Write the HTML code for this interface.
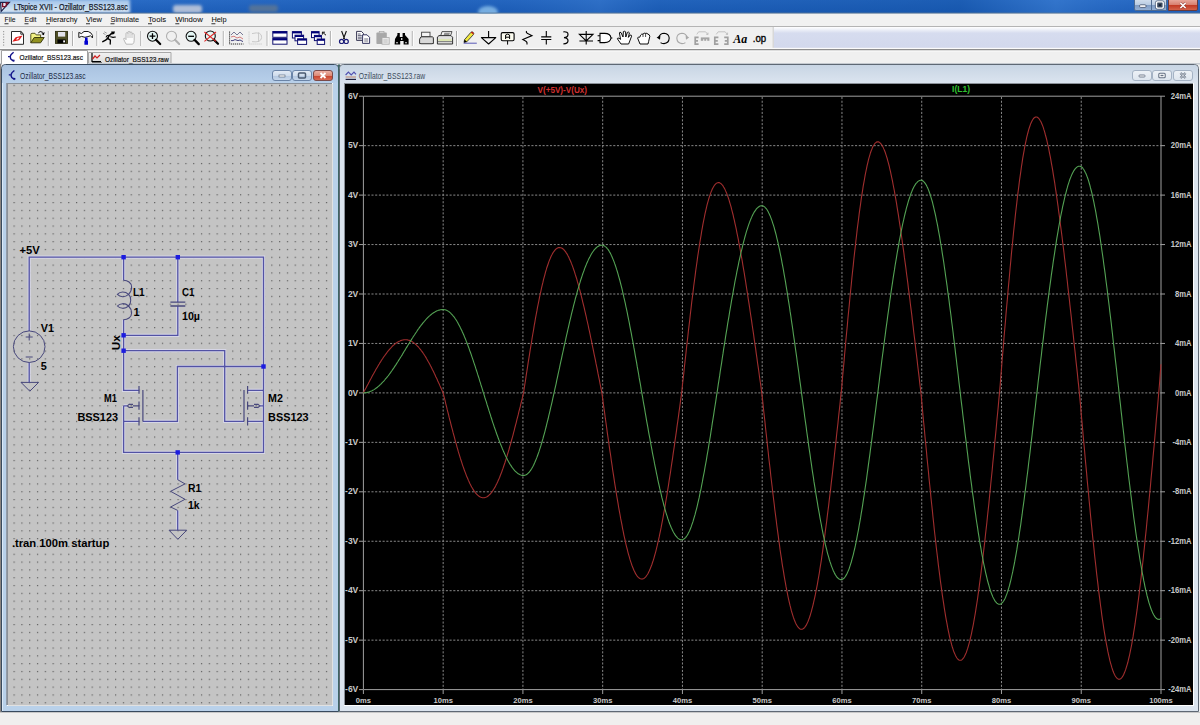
<!DOCTYPE html>
<html><head><meta charset="utf-8"><style>
html,body{margin:0;padding:0;width:1200px;height:725px;overflow:hidden;background:#f0f0f0}
svg{display:block;font-family:"Liberation Sans", sans-serif}
</style></head><body>
<svg width="1200" height="725" viewBox="0 0 1200 725">
<defs>
<linearGradient id="tbase" x1="0" y1="0" x2="0" y2="1">
 <stop offset="0" stop-color="#2a6cc6"/><stop offset="1" stop-color="#1c5cb6"/>
</linearGradient>
<linearGradient id="tbh" x1="0" y1="0" x2="1" y2="0">
 <stop offset="0" stop-color="#2a6cc6" stop-opacity="0"/><stop offset="0.3" stop-color="#1858b0" stop-opacity="0.5"/><stop offset="0.42" stop-color="#1858b0" stop-opacity="0.4"/><stop offset="0.5" stop-color="#3474c8" stop-opacity="0.6"/><stop offset="0.55" stop-color="#1656ac" stop-opacity="0.5"/><stop offset="0.8" stop-color="#1252a6" stop-opacity="0.7"/><stop offset="0.88" stop-color="#3a7cd0" stop-opacity="0.7"/><stop offset="0.95" stop-color="#2466c0" stop-opacity="0.4"/><stop offset="1" stop-color="#2a6cc6" stop-opacity="0.2"/>
</linearGradient>
<linearGradient id="tglow" x1="0" y1="0" x2="0" y2="1">
 <stop offset="0" stop-color="#9cc0e8"/><stop offset="1" stop-color="#e0ecf6"/>
</linearGradient>
<filter id="bl2" x="-20%" y="-50%" width="140%" height="200%"><feGaussianBlur stdDeviation="1.6"/></filter>
<linearGradient id="tbg" x1="0" y1="0" x2="1" y2="0">
 <stop offset="0" stop-color="#5f90cc"/><stop offset="0.12" stop-color="#4a80c4"/><stop offset="0.2" stop-color="#2566b8"/><stop offset="1" stop-color="#1f5fb5"/>
</linearGradient>
<linearGradient id="tbv" x1="0" y1="0" x2="0" y2="1">
 <stop offset="0" stop-color="#ffffff" stop-opacity="0.12"/><stop offset="1" stop-color="#000000" stop-opacity="0.08"/>
</linearGradient>
<radialGradient id="glow" cx="0.5" cy="0.5" r="0.5">
 <stop offset="0" stop-color="#d8e8f8" stop-opacity="0.85"/><stop offset="0.7" stop-color="#b8d4f0" stop-opacity="0.5"/><stop offset="1" stop-color="#b8d4f0" stop-opacity="0"/>
</radialGradient>
<linearGradient id="actT" x1="0" y1="0" x2="0" y2="1">
 <stop offset="0" stop-color="#a9c2e0"/><stop offset="1" stop-color="#b8d0ea"/>
</linearGradient>
<linearGradient id="inaT" x1="0" y1="0" x2="0" y2="1">
 <stop offset="0" stop-color="#c8d5e4"/><stop offset="1" stop-color="#dbe4ef"/>
</linearGradient>
<linearGradient id="rebar" x1="0" y1="0" x2="0" y2="1">
 <stop offset="0" stop-color="#ffffff"/><stop offset="0.28" stop-color="#d6dcef"/><stop offset="1" stop-color="#d2d8ec"/>
</linearGradient>
<linearGradient id="btnB" x1="0" y1="0" x2="0" y2="1">
 <stop offset="0" stop-color="#d4e0ee"/><stop offset="0.5" stop-color="#b8cbe2"/><stop offset="0.55" stop-color="#7f9cc4"/><stop offset="1" stop-color="#97b2d6"/>
</linearGradient>
<linearGradient id="btnR" x1="0" y1="0" x2="0" y2="1">
 <stop offset="0" stop-color="#eab0a4"/><stop offset="0.5" stop-color="#d88070"/><stop offset="0.55" stop-color="#c23a24"/><stop offset="1" stop-color="#d4664e"/>
</linearGradient>
<linearGradient id="cbtnB" x1="0" y1="0" x2="0" y2="1">
 <stop offset="0" stop-color="#e4ecf6"/><stop offset="0.5" stop-color="#cfdcec"/><stop offset="0.55" stop-color="#b4c8e0"/><stop offset="1" stop-color="#c8d8ec"/>
</linearGradient>
<linearGradient id="cbtnR" x1="0" y1="0" x2="0" y2="1">
 <stop offset="0" stop-color="#eeb4a8"/><stop offset="0.5" stop-color="#dc8a78"/><stop offset="0.55" stop-color="#c8442e"/><stop offset="1" stop-color="#dc7058"/>
</linearGradient>
<linearGradient id="cbtnI" x1="0" y1="0" x2="0" y2="1">
 <stop offset="0" stop-color="#eef2f7"/><stop offset="1" stop-color="#dde5ee"/>
</linearGradient>
<linearGradient id="tab2" x1="0" y1="0" x2="0" y2="1">
 <stop offset="0" stop-color="#f2f2f2"/><stop offset="1" stop-color="#dcdcdc"/>
</linearGradient>
<pattern id="dots" x="13.5" y="84.8" width="7.81" height="7.815" patternUnits="userSpaceOnUse">
 <rect x="0" y="0" width="1.2" height="1.2" fill="#5e5e5e"/>
</pattern>
<clipPath id="pc"><rect x="345" y="84" width="848" height="621"/></clipPath>
</defs>

<rect x="0" y="0" width="1200" height="13" fill="url(#tbase)"/>
<rect x="0" y="0" width="1200" height="13" fill="url(#tbh)" opacity="0.8"/>
<g filter="url(#bl2)"><rect x="-4" y="-1" width="134" height="14" fill="url(#tglow)"/></g>
<g filter="url(#bl2)"><rect x="173" y="5" width="29" height="8" rx="3" fill="#ece6e2" opacity="0.7"/><rect x="249" y="5" width="29" height="7" rx="3" fill="#6a7a8c" opacity="0.7"/><ellipse cx="488" cy="12" rx="10" ry="6" fill="#9cd0f4" opacity="0.7"/></g>
<rect x="0" y="12.6" width="1200" height="1" fill="#5a7898"/>
<path d="M0.6,2.4 H9.4 L1.2,11.4 Z" fill="#e8e4f0" stroke="#18204a" stroke-width="1.2"/>
<path d="M2.6,3 V6.6 H5 M5.4,3 H8.6 M7,3 L5.6,6.8" stroke="#801028" stroke-width="1.3" fill="none"/>
<text x="13.8" y="10" font-size="8.5" fill="#18222e" stroke="#18222e" stroke-width="0.25" textLength="114" lengthAdjust="spacingAndGlyphs" >LTspice XVII - Ozillator_BSS123.asc</text>
<path d="M1134.5,-1 V9 Q1134.5,10.5 1136,10.5 H1166.5 V-1" fill="url(#btnB)" stroke="#4e6a90"/>
<path d="M1151.5,-1 V10.5" stroke="#4e6a90"/>
<path d="M1168.5,-1 V10.5 H1196 Q1197.5,10.5 1197.5,9 V-1" fill="url(#btnR)" stroke="#6a3a3a"/>
<rect x="1139.6" y="4.8" width="6.4" height="2.6" rx="1" fill="#fff" stroke="#2a3a58" stroke-width="0.7"/>
<rect x="1156.4" y="1.8" width="7" height="6.4" rx="1.4" fill="#3a4a60" stroke="#fff" stroke-width="1.6"/>
<rect x="1155.4" y="0.8" width="9" height="8.4" rx="2" fill="none" stroke="#2a3a58" stroke-width="0.6"/>
<rect x="1158.9" y="4.2" width="2" height="1.8" fill="#1a2030"/>
<path d="M1180.4,3 L1185.6,8 M1185.6,3 L1180.4,8" stroke="#5a2020" stroke-width="2.6" opacity="0.5"/><path d="M1180.4,3 L1185.6,8 M1185.6,3 L1180.4,8" stroke="#fff" stroke-width="1.6"/>
<rect x="0" y="14" width="1200" height="12" fill="#f1f1f1"/>
<rect x="0" y="26" width="1200" height="1" fill="#b4b4b4"/>
<text x="4.5" y="22.3" font-size="8" fill="#101010" stroke="#101010" stroke-width="0.06" textLength="11" lengthAdjust="spacingAndGlyphs" >File</text>
<rect x="4.5" y="23.4" width="4" height="0.8" fill="#000"/>
<text x="24.5" y="22.3" font-size="8" fill="#101010" stroke="#101010" stroke-width="0.06" textLength="12" lengthAdjust="spacingAndGlyphs" >Edit</text>
<rect x="24.5" y="23.4" width="4" height="0.8" fill="#000"/>
<text x="46" y="22.3" font-size="8" fill="#101010" stroke="#101010" stroke-width="0.06" textLength="31.5" lengthAdjust="spacingAndGlyphs" >Hierarchy</text>
<rect x="46" y="23.4" width="4" height="0.8" fill="#000"/>
<text x="86" y="22.3" font-size="8" fill="#101010" stroke="#101010" stroke-width="0.06" textLength="16" lengthAdjust="spacingAndGlyphs" >View</text>
<rect x="86" y="23.4" width="4" height="0.8" fill="#000"/>
<text x="110.5" y="22.3" font-size="8" fill="#101010" stroke="#101010" stroke-width="0.06" textLength="28.6" lengthAdjust="spacingAndGlyphs" >Simulate</text>
<rect x="110.5" y="23.4" width="4" height="0.8" fill="#000"/>
<text x="148" y="22.3" font-size="8" fill="#101010" stroke="#101010" stroke-width="0.06" textLength="18" lengthAdjust="spacingAndGlyphs" >Tools</text>
<rect x="148" y="23.4" width="4" height="0.8" fill="#000"/>
<text x="175.3" y="22.3" font-size="8" fill="#101010" stroke="#101010" stroke-width="0.06" textLength="27.4" lengthAdjust="spacingAndGlyphs" >Window</text>
<rect x="175.3" y="23.4" width="4" height="0.8" fill="#000"/>
<text x="211.4" y="22.3" font-size="8" fill="#101010" stroke="#101010" stroke-width="0.06" textLength="15.2" lengthAdjust="spacingAndGlyphs" >Help</text>
<rect x="211.4" y="23.4" width="4" height="0.8" fill="#000"/>
<rect x="0" y="27" width="774" height="22" fill="#f0f0f0"/>
<rect x="772.5" y="27" width="1.5" height="22" fill="#d8d8d8"/>
<rect x="774" y="27" width="426" height="22" fill="url(#rebar)"/>
<rect x="0" y="47.8" width="1200" height="1.2" fill="#fbfbfb"/>
<rect x="3" y="31.0" width="1.2" height="1.2" fill="#a0a0a0"/>
<rect x="3" y="33.7" width="1.2" height="1.2" fill="#a0a0a0"/>
<rect x="3" y="36.4" width="1.2" height="1.2" fill="#a0a0a0"/>
<rect x="3" y="39.1" width="1.2" height="1.2" fill="#a0a0a0"/>
<rect x="3" y="41.8" width="1.2" height="1.2" fill="#a0a0a0"/>
<rect x="3" y="44.5" width="1.2" height="1.2" fill="#a0a0a0"/>
<rect x="47.8" y="31" width="1" height="15" fill="#a8a8a8"/><rect x="48.8" y="31" width="1" height="15" fill="#ffffff"/>
<rect x="72.1" y="31" width="1" height="15" fill="#a8a8a8"/><rect x="73.1" y="31" width="1" height="15" fill="#ffffff"/>
<rect x="96.4" y="31" width="1" height="15" fill="#a8a8a8"/><rect x="97.4" y="31" width="1" height="15" fill="#ffffff"/>
<rect x="140.3" y="31" width="1" height="15" fill="#a8a8a8"/><rect x="141.3" y="31" width="1" height="15" fill="#ffffff"/>
<rect x="222.8" y="31" width="1" height="15" fill="#a8a8a8"/><rect x="223.8" y="31" width="1" height="15" fill="#ffffff"/>
<rect x="266.6" y="31" width="1" height="15" fill="#a8a8a8"/><rect x="267.6" y="31" width="1" height="15" fill="#ffffff"/>
<rect x="329.9" y="31" width="1" height="15" fill="#a8a8a8"/><rect x="330.9" y="31" width="1" height="15" fill="#ffffff"/>
<rect x="411.8" y="31" width="1" height="15" fill="#a8a8a8"/><rect x="412.8" y="31" width="1" height="15" fill="#ffffff"/>
<rect x="456.0" y="31" width="1" height="15" fill="#a8a8a8"/><rect x="457.0" y="31" width="1" height="15" fill="#ffffff"/>
<g id="icons">
<!-- new -->
<path d="M11.5,31.5 H20.8 L23.5,34.2 V44.3 H11.5 Z" fill="#fff" stroke="#2a2a2a" stroke-width="1"/>
<path d="M20.8,31.5 V34.2 H23.5 Z" fill="#ffffff" stroke="#1a1a1a" stroke-width="0.9"/>
<path d="M12.3,41.8 L15.6,37.2 L22.6,35.4 L19.2,40.2 Z" fill="#e01818"/>
<path d="M15.8,39.6 L17.6,37.8 L19.6,37.6 L18,39.4 Z" fill="#fff"/>
<!-- open -->
<path d="M30.8,42.8 V34.6 Q30.8,33.3 32,33.3 H35 L36.2,34.9 H40.6 V37.6" fill="#f2f284" stroke="#50501a" stroke-width="0.95"/>
<path d="M30.8,42.8 L34.2,37.5 H44.2 L40.6,42.8 Z" fill="#929220" stroke="#38380c" stroke-width="0.95" stroke-linejoin="round"/>
<path d="M38.3,32.9 Q39.8,30.4 42.8,32.4" fill="none" stroke="#000" stroke-width="1"/>
<path d="M41.4,33.9 L44.6,32 L43.9,35.2 Z" fill="#000"/>
<!-- save -->
<rect x="55.5" y="31.4" width="12" height="12" fill="#4e4e24" stroke="#2c2c10" stroke-width="0.9"/>
<rect x="58" y="32" width="7.2" height="4.6" fill="#e2e2ea"/>
<rect x="57.4" y="39.4" width="8.2" height="3.8" fill="#000"/>
<rect x="63.2" y="40.4" width="1.8" height="2" fill="#fff"/>
<!-- hammer -->
<path d="M78.8,32.4 L81.4,33.6 L84,31.5 H88.2 Q91.6,32.6 92.6,35.6 L92.4,38 Q91.8,36.2 90.6,35.8 Q88,36.6 85,37.3 L81.6,36.4 L78.8,37.5 Z" fill="#fff" stroke="#1a1a1a" stroke-width="1" stroke-linejoin="round"/>
<path d="M85,37.5 H87.6 V40.6 L88,41 V44.8 H84.4 V41 L85,40.6 Z" fill="#0000d0"/>
<!-- runner -->
<g stroke="#000" fill="none" stroke-linecap="round">
<path d="M102.8,41.6 L105.6,40.2 L107.6,38.4 L109.2,35.6 L111.6,33.4" stroke-width="1.5"/>
<path d="M107.6,38.4 L110.4,40.2 L110.2,44" stroke-width="1.3"/>
<path d="M109,35.2 L107,35.8 L106.2,37" stroke-width="1.1"/>
<path d="M110.6,36.8 L113,37.4 L115.4,37" stroke-width="1.1"/>
<path d="M103.4,33.4 L105.2,34.4 M104.6,32 L106.4,33" stroke-width="0.6" stroke="#666"/>
</g>
<path d="M111.2,31.6 H115 L114.2,34 L112,34.6 Z" fill="#000"/>
<!-- hand gray -->
<path d="M126.2,44.2 Q124.8,42 123.8,39.4 Q123.4,38 124.6,38.2 L126,39.6 V33.6 Q126,32.6 127,32.6 Q128,32.6 128,33.6 V32.4 Q128,31.4 129,31.4 Q130,31.4 130,32.4 V32.8 Q130,32 131,32 Q132,32 132,33 V34.4 Q132,33.6 133,33.6 Q134.2,33.6 134.2,34.6 V40.4 Q134.2,43 132.6,44.2 Z" fill="#fbfbfb" stroke="#b0b0b0" stroke-width="0.9"/>
<path d="M128,33.6 V38 M130,32.8 V38 M132,34.4 V38" stroke="#b8b8b8" stroke-width="0.8" fill="none"/>
<!-- zoom in -->
<circle cx="152.5" cy="36.2" r="5" fill="#e4f6f4" stroke="#101010" stroke-width="1.1"/>
<path d="M156,39.8 L160.2,44" stroke="#000" stroke-width="2.2" stroke-linecap="round"/>
<path d="M149.6,36.2 H155.4 M152.5,33.3 V39.1" stroke="#000" stroke-width="1.3"/>
<!-- zoom gray -->
<circle cx="171.5" cy="36.2" r="5" fill="#f0f0f0" stroke="#b0b0b0" stroke-width="1.1"/>
<path d="M175,39.8 L179.2,44" stroke="#b0b0b0" stroke-width="2" stroke-linecap="round"/>
<!-- zoom out -->
<circle cx="191.1" cy="36.3" r="5" fill="#e4f6f4" stroke="#101010" stroke-width="1.1"/>
<path d="M194.6,39.9 L198.8,44.1" stroke="#000" stroke-width="2.2" stroke-linecap="round"/>
<path d="M188.2,36.3 H194" stroke="#000" stroke-width="1.3"/>
<!-- zoom fit -->
<circle cx="210.3" cy="36" r="5" fill="#e4f6f4" stroke="#101010" stroke-width="1.1"/>
<path d="M213.8,39.6 L218,43.8" stroke="#000" stroke-width="2.2" stroke-linecap="round"/>
<path d="M204.4,32 L216,41.4 M204.4,41.4 L216,32" stroke="#e02828" stroke-width="1.1"/>
<!-- plot icon -->
<path d="M229.6,31.6 V44 H243.6" stroke="#000" stroke-width="1" fill="none" stroke-dasharray="1,1"/>
<path d="M231,35 L234,32 L237,35 L240,32 L243,35" stroke="#6a6a8a" stroke-width="0.9" fill="none"/>
<path d="M231,37 L234,36.2 L237,38 L240,37 L243,39" stroke="#d07070" stroke-width="0.9" fill="none"/>
<path d="M231,40.6 L233,40.6 L235,39.6 L238,40.6 L240,40 L243,41.6" stroke="#303070" stroke-width="0.9" fill="none"/>
<!-- gray plot icon -->
<path d="M249,31.6 V44 H262.6" stroke="#c0c0c0" stroke-width="1" fill="none" stroke-dasharray="1,1"/>
<path d="M252,33.6 Q262,31 261.6,37.6 Q261,43 252,41.6 M258.6,32.4 V42" stroke="#c4c4c4" stroke-width="0.9" fill="none"/>
<!-- tile -->
<rect x="272.8" y="31.5" width="14.2" height="5.8" fill="#fff" stroke="#101070" stroke-width="1"/>
<rect x="272.8" y="31.5" width="14.2" height="2" fill="#000078"/>
<rect x="272.8" y="38.4" width="14.2" height="5.8" fill="#fff" stroke="#101070" stroke-width="1"/>
<rect x="272.8" y="38.4" width="14.2" height="2" fill="#000078"/>
<!-- cascade -->
<rect x="292.4" y="31.6" width="9" height="6.4" fill="#fff" stroke="#101070"/><rect x="292.4" y="31.6" width="9" height="1.8" fill="#000078"/>
<rect x="295" y="35.2" width="8.6" height="5.6" fill="#fff" stroke="#101070"/><rect x="295" y="35.2" width="8.6" height="1.8" fill="#000078"/>
<rect x="297.6" y="38.8" width="9" height="5.6" fill="#fff" stroke="#101070"/><rect x="297.6" y="38.8" width="9" height="1.8" fill="#000078"/>
<!-- cascade arrow -->
<rect x="311.5" y="31.6" width="7.6" height="6" fill="#fff" stroke="#101070"/><rect x="311.5" y="31.6" width="7.6" height="1.8" fill="#000078"/>
<rect x="314.4" y="35.4" width="7" height="5.2" fill="#fff" stroke="#101070"/><rect x="314.4" y="35.4" width="7" height="1.8" fill="#000078"/>
<rect x="317.2" y="39" width="7.4" height="5.4" fill="#fff" stroke="#101070"/><rect x="317.2" y="39" width="7.4" height="1.8" fill="#000078"/>
<path d="M322.4,32.2 L326,35.2 M322.4,32.2 H325 M322.4,32.2 V34.6" stroke="#000" stroke-width="0.9" fill="none"/>
<!-- scissors -->
<path d="M341.6,31 L344.6,39 M346.4,31 L343.4,39" stroke="#101010" stroke-width="1.1" fill="none"/>
<circle cx="341.6" cy="41.4" r="2.1" fill="none" stroke="#1c1c78" stroke-width="1.2"/>
<circle cx="346.2" cy="41.4" r="2.1" fill="none" stroke="#1c1c78" stroke-width="1.2"/>
<!-- copy -->
<path d="M356.6,31.4 H361.4 L363.4,33.4 V40.4 H356.6 Z" fill="#fff" stroke="#202040" stroke-width="0.9"/>
<path d="M357.8,34 H360.6 M357.8,35.6 H361.8 M357.8,37.2 H361.8 M357.8,38.8 H361.8" stroke="#202040" stroke-width="0.7"/>
<path d="M362.6,34.8 H367 L369.6,37.4 V43.4 H362.6 Z" fill="#fff" stroke="#202050" stroke-width="0.9"/>
<rect x="364.2" y="38" width="4" height="4.4" fill="#b8b8c0"/>
<!-- paste gray -->
<rect x="376.4" y="32.6" width="10.4" height="11.4" rx="0.8" fill="#a8a8a8"/>
<rect x="379.2" y="31.6" width="4.8" height="2" fill="#d0d0d0" stroke="#a0a0a0" stroke-width="0.6"/>
<rect x="382" y="37.6" width="7.2" height="6.6" fill="#e8e8e8" stroke="#a8a8a8" stroke-width="0.8"/>
<path d="M383.4,40 H387.6 M383.4,42 H387.6" stroke="#b0b0b0" stroke-width="0.7"/>
<!-- binoculars -->
<path d="M394.6,44.4 L395,39 L397.4,35 V33 H399.8 V37 H402.6 V33 H405 V35 L408.6,39 V44.4 H403.6 V41 H400.2 V44.4 Z" fill="#000"/>
<circle cx="397" cy="42.8" r="0.8" fill="#fff"/><circle cx="406" cy="42.8" r="0.8" fill="#fff"/>
<rect x="401" y="38.2" width="1.4" height="1.6" fill="#fff"/>
<!-- printer -->
<rect x="421.6" y="32.2" width="8.4" height="4.6" fill="#f4f4f4" stroke="#404040" stroke-width="0.9"/>
<path d="M419.6,43.6 V39.2 L421,36.8 H432.6 Q433.4,37 433.4,39 V43.6 Z" fill="#d8d8d8" stroke="#303030" stroke-width="1"/>
<rect x="421" y="43.2" width="11" height="1" fill="#606060"/>
<!-- printer2 -->
<path d="M440.6,36 L442,31.6 H452 L450.4,36" fill="#f4f4f4" stroke="#404040" stroke-width="0.9"/>
<path d="M443.4,35.8 L444.4,32.8 H450 L449,35.8" fill="#909090"/>
<path d="M437.4,44 V37 L439,35.6 H451 L452.6,37.2 V44 Z" fill="#e0e0e0" stroke="#303030" stroke-width="1"/>
<rect x="438.4" y="39.2" width="13" height="1.6" fill="#dce8a8"/>
<path d="M437.6,41.6 H452.4" stroke="#505050" stroke-width="0.7"/>
<!-- pencil -->
<path d="M464,42.4 L464.6,39.6 L470.8,32.4 Q472,31.2 473.2,32.4 Q474.2,33.6 473.4,34.6 L466.8,41.8 Z" fill="#f0e840" stroke="#202020" stroke-width="0.8"/>
<path d="M470.8,32.4 Q472,31.2 473.2,32.4 Q474.2,33.6 473.4,34.6 L472,33.4 Z" fill="#c01818"/>
<path d="M464,42.4 L464.6,39.6 L466.8,41.8 Z" fill="#000"/>
<path d="M463.6,43.2 H476.8" stroke="#4848b0" stroke-width="0.9"/>
<!-- ground -->
<path d="M488.6,31 V37.6 M481.4,37.6 H495.8 L488.6,44 Z" stroke="#000" stroke-width="1.1" fill="none" stroke-linejoin="round"/>
<!-- label -->
<rect x="501.2" y="32.6" width="12.9" height="8.2" rx="1.5" fill="#fcfcf0" stroke="#000" stroke-width="1.1"/>
<path d="M507.6,40.8 V44.6" stroke="#000" stroke-width="1"/>
<path d="M505.6,39 V35 Q507.6,33.4 509.6,35 V39 M505.6,37.2 H509.6" stroke="#000" stroke-width="1" fill="none"/>
<!-- resistor -->
<path d="M526.6,31 Q525.6,32.4 527.6,33.4 L532,35.6 L522.8,39.6 Q526.6,41.4 527,42.6 V44.6" stroke="#000" stroke-width="1.1" fill="none"/>
<!-- capacitor -->
<path d="M546.3,31 V36.9 M546.3,39.5 V44.6 M541.2,36.9 H551.3 M541.2,39.5 H551.3" stroke="#000" stroke-width="1.1" fill="none"/>
<!-- inductor -->
<path d="M563.4,31.8 Q568,31.4 568,34.2 Q568,37.4 564,37.6 Q568,38 568,40.8 Q568,43.8 563.4,43.8" stroke="#000" stroke-width="1.2" fill="none"/>
<!-- diode -->
<path d="M586.2,31 V44.6 M579.4,34.4 H593 L586.2,41 Z M579.4,41 H593" stroke="#000" stroke-width="1.1" fill="none"/>
<!-- and gate -->
<path d="M600,33.4 H604.6 Q610.4,33.4 611,38 Q610.4,42.6 604.6,42.6 H600 Z" fill="#fff" stroke="#000" stroke-width="1.1"/>
<path d="M597.6,35.8 H600 M597.6,40.6 H600 M611,38 H612.4" stroke="#000" stroke-width="1.1"/>
<!-- open hand -->
<path d="M621,44 L617.4,38.8 Q617.4,37.6 619,38.2 L620.6,39.4 L619.4,33 Q619.6,31.6 621,32.6 L623,37 L623.4,31.6 Q624.6,30.8 625.6,31.8 L625.8,37 L627.4,32.4 Q628.6,31.6 629.4,32.8 L628.4,37.4 L630.2,35 Q631.6,34.8 631.6,36.2 L629.4,42 L628.6,44 Z" fill="#fff" stroke="#000" stroke-width="0.95"/>
<!-- grab hand -->
<path d="M640,44 L637.6,38 Q638,36.6 639.8,37.2 L640.6,35.2 Q641.6,33.6 643,34.2 Q644,32.6 645.6,33.4 Q647,32.8 648,34.2 Q649.6,34.4 649.8,36.4 L648.6,41.6 L648,44 Z" fill="#fff" stroke="#000" stroke-width="0.95"/>
<path d="M643,34.2 V37 M645.6,33.4 V37" stroke="#000" stroke-width="0.7"/>
<!-- undo -->
<path d="M658.6,37.6 Q660,33.2 664.2,33.2 Q668.8,33.6 669.2,38 Q669,43.2 664,43.6 Q661.6,43.6 660.6,42.6" stroke="#000" stroke-width="1.1" fill="none"/>
<path d="M656.6,37.4 L660.4,35.4 L660,39.8 Z" fill="#000"/>
<!-- redo gray -->
<path d="M687.4,37.6 Q686,33.2 681.8,33.2 Q677.2,33.6 676.8,38 Q677,43.2 682,43.6 Q684.4,43.6 685.4,42.6" stroke="#a8a8a8" stroke-width="1.1" fill="none"/>
<path d="M689.2,37.4 L685.6,35.4 L686,39.8 Z" fill="#a8a8a8"/>
<!-- mirror gray -->
<path d="M698.6,37.4 H695.2 V44.2 H698.6 M695.2,40.8 H698 " stroke="#a0a0a0" stroke-width="1.7" fill="none"/>
<rect x="700.8" y="37.4" width="8.6" height="3.4" fill="#a4a4a4"/><rect x="703" y="39.4" width="1.3" height="1.4" fill="#f0f0f0"/><rect x="706" y="39.4" width="1.3" height="1.4" fill="#f0f0f0"/>
<path d="M696.8,34.4 L698.6,31.8 H705.6 L707.8,34.4 M706.2,34.4 H708 V32.6" stroke="#b0b0b0" stroke-width="0.7" fill="none"/>
<!-- rotate gray -->
<path d="M718.4,37.4 H714.8 V44.2 H718.4 M714.8,40.8 H717.8" stroke="#a0a0a0" stroke-width="1.7" fill="none"/>
<path d="M724.2,37.4 H727.8 V44.2 H724.2 M727.8,40.8 H724.8" stroke="#a0a0a0" stroke-width="1.7" fill="none"/>
<path d="M716.2,34.4 L718.2,31.8 H725.2 L727.4,34.4 M725.8,34.4 H727.6 V32.6" stroke="#b0b0b0" stroke-width="0.7" fill="none"/>
<!-- Aa -->
<text x="733.2" y="43" font-family="Liberation Serif, serif" font-size="11.5" font-weight="bold" font-style="italic" fill="#000" textLength="14" lengthAdjust="spacingAndGlyphs">Aa</text>
<!-- .op -->
<text x="752.8" y="42.2" font-family="Liberation Sans, sans-serif" font-size="11" fill="#000" stroke="#000" stroke-width="0.35" textLength="13.4" lengthAdjust="spacingAndGlyphs">.op</text>
</g>

<rect x="0" y="50" width="1200" height="14" fill="#f0f0f0"/>
<rect x="0" y="49" width="1200" height="1.5" fill="#8e8e8e"/>
<rect x="0" y="50.5" width="1200" height="1" fill="#fcfcfc"/>
<path d="M1.5,64 V50.5 H87.5 V64" fill="#ffffff" stroke="#a0a0a0"/>
<path d="M88.5,63 V52.5 H171 V63" fill="url(#tab2)" stroke="#a8a8a8"/>
<rect x="0" y="63.5" width="1200" height="1" fill="#9aa4b0"/>
<rect x="2" y="63" width="85" height="1.5" fill="#ffffff"/>
<path d="M13.6,52.2 L11.2,54.4 Q9.4,56.6 11,59.4 L13.8,61.4 M8,56.6 H9.6" stroke="#101088" stroke-width="1.3" fill="none"/><path d="M12,59.6 L14.4,61.8 L14.6,59.8 Z" fill="#101088"/>
<path d="M92,53 V61.5 H101 M92,61.5 L92,61.5" stroke="#000" stroke-width="1.2" fill="none"/><path d="M92.5,59 L95,56 L97,58 L100,55" stroke="#d02020" stroke-width="1.2" fill="none"/>
<rect x="92.5" y="62" width="1" height="1" fill="#000"/>
<rect x="94.5" y="62" width="1" height="1" fill="#000"/>
<rect x="96.5" y="62" width="1" height="1" fill="#000"/>
<rect x="98.5" y="62" width="1" height="1" fill="#000"/>
<rect x="100.5" y="62" width="1" height="1" fill="#000"/>
<text x="19.5" y="60.2" font-size="8" fill="#101010" stroke="#101010" stroke-width="0.2" textLength="63.4" lengthAdjust="spacingAndGlyphs" >Ozillator_BSS123.asc</text>
<text x="105" y="61.6" font-size="8" fill="#101010" stroke="#101010" stroke-width="0.2" textLength="63.7" lengthAdjust="spacingAndGlyphs" >Ozillator_BSS123.raw</text>
<rect x="0" y="64.5" width="1200" height="647.5" fill="#f0f0f0"/>
<rect x="0" y="64" width="1.2" height="648" fill="#8a8480"/>
<path d="M1.5,711.5 V68.5 Q1.5,64.5 5.5,64.5 H334.5 Q338.5,64.5 338.5,68.5 V711.5 Z" fill="#b9d1ea" stroke="#384a5e"/>
<path d="M2,83 V69 Q2,65 6,65 H334 Q338,65 338,69 V83 Z" fill="url(#actT)"/>
<rect x="2" y="83" width="1" height="628" fill="#dce9f6"/>
<rect x="7" y="83" width="326" height="623" fill="#ffffff"/>
<rect x="6.2" y="83" width="325.8" height="622" fill="#8a9098"/>
<rect x="8" y="84" width="324.5" height="621.5" fill="#c4c4c4"/>
<rect x="8" y="84" width="324.5" height="621.5" fill="url(#dots)"/>
<path d="M14.4,70.4 L12,72.6 Q10.2,74.8 11.8,77.6 L14.6,79.6 M8.8,74.8 H10.4" stroke="#101088" stroke-width="1.3" fill="none"/><path d="M12.8,77.8 L15.2,80 L15.4,78 Z" fill="#101088"/>
<text x="20.1" y="78.7" font-size="8.5" fill="#1a2a44" textLength="65.5" lengthAdjust="spacingAndGlyphs" >Ozillator_BSS123.asc</text>
<rect x="272.5" y="70.5" width="19" height="10" rx="2.5" fill="url(#cbtnB)" stroke="#6a84a8"/>
<rect x="292.5" y="70.5" width="19" height="10" rx="2.5" fill="url(#cbtnB)" stroke="#6a84a8"/>
<rect x="313.5" y="70.5" width="19" height="10" rx="2.5" fill="url(#cbtnR)" stroke="#7a4a4a"/>
<rect x="279" y="75" width="6" height="2" fill="#fff" stroke="#4a5a70" stroke-width="0.6"/>
<rect x="298.5" y="73" width="7" height="5" rx="1" fill="none" stroke="#4a5a70" stroke-width="1.5"/>
<path d="M320.5,73 L325.5,78 M325.5,73 L320.5,78" stroke="#fff" stroke-width="1.8"/>
<path d="M29.2,331 V257.2 H263.5 V452.4 H123.6 V405.9 M123.6,257.2 V280.3 M123.6,319.7 V390.3 H139 M177.8,257.2 V302.2 M177.8,306 V335.3 H123.6 M123.6,350.7 H224.7 V421.4 H244 M263.5,366.5 H177.4 V421.4 H142.9 M123.6,421.4 H139 M247.6,390.3 H263.5 M247.6,421.4 H263.5 M29.2,362.5 V382.4 M177.7,452.4 V479.7 M177.7,510.4 V530.2 M123.6,405.9 H127.4 M259.8,405.9 H263.5" stroke="#d6d6e6" stroke-width="3.2" fill="none"/>
<path d="M29.2,331 V257.2 H263.5 V452.4 H123.6 V405.9 M123.6,257.2 V280.3 M123.6,319.7 V390.3 H139 M177.8,257.2 V302.2 M177.8,306 V335.3 H123.6 M123.6,350.7 H224.7 V421.4 H244 M263.5,366.5 H177.4 V421.4 H142.9 M123.6,421.4 H139 M247.6,390.3 H263.5 M247.6,421.4 H263.5 M29.2,362.5 V382.4 M177.7,452.4 V479.7 M177.7,510.4 V530.2 M123.6,405.9 H127.4 M259.8,405.9 H263.5" stroke="#5252a4" stroke-width="1.3" fill="none"/>
<rect x="121.39999999999999" y="255.0" width="4.4" height="4.4" fill="#1c1ce0"/>
<rect x="175.60000000000002" y="255.0" width="4.4" height="4.4" fill="#1c1ce0"/>
<rect x="121.39999999999999" y="333.1" width="4.4" height="4.4" fill="#1c1ce0"/>
<rect x="121.39999999999999" y="348.5" width="4.4" height="4.4" fill="#1c1ce0"/>
<rect x="261.3" y="364.3" width="4.4" height="4.4" fill="#1c1ce0"/>
<rect x="175.5" y="450.2" width="4.4" height="4.4" fill="#1c1ce0"/>
<circle cx="29.2" cy="346.7" r="15.8" fill="none" stroke="#48487c"/>
<path d="M25.7,337 H32.7 M29.2,333.5 V340.5 M25.7,357 H32.7" stroke="#48487c" fill="none"/>
<path d="M21,382.4 H38.6 L29.8,391.2 Z M169,530.2 H186.7 L177.8,539.3 Z" stroke="#48487c" fill="none"/>
<path d="M123.6,280.3 C127.5,280.3 131.6,282.6 131.6,287 C131.6,290.3 130.2,292.8 128.6,294.4 C125,291.2 120,291.4 117.4,294.4 C120,297.4 125,297.6 128.6,294.4 C131.4,297 131.4,303.4 128.6,306 C125,302.8 120,303 117.4,306 C120,309 125,309.2 128.6,306 C130.2,307.6 131.6,309.6 131.6,313 C131.6,317.4 127.5,319.7 123.6,319.7" stroke="#48487c" stroke-width="1.1" fill="none"/>
<path d="M170.4,302.2 H185.3 M170.4,306 H185.3" stroke="#48487c" stroke-width="1.3" fill="none"/>
<path d="M177.7,479.7 L185,483.9 L170.6,491.3 L185,499.3 L170.6,507 L177.7,510.4" stroke="#48487c" fill="none"/>
<path d="M139,385.9 V393.8 M139,401.4 V409.7 M139,417.2 V425.5 M142.9,390 V421.4" stroke="#48487c" stroke-width="1.2" fill="none"/>
<path d="M133,405.9 H139 M129.4,404.4 H133 M129.4,407.4 H133 M129.6,403.9 L127.4,405.9 L129.6,407.9" stroke="#48487c" stroke-width="1.1" fill="none"/>
<path d="M247.6,385.9 V393.8 M247.6,401.4 V409.7 M247.6,417.2 V425.5 M244,390 V421.4" stroke="#48487c" stroke-width="1.2" fill="none"/>
<path d="M247.6,405.9 H254 M254,404.4 H257.8 M254,407.4 H257.8 M257.6,403.9 L259.8,405.9 L257.6,407.9" stroke="#48487c" stroke-width="1.1" fill="none"/>
<text x="19.4" y="254.3" font-size="11" fill="#000" font-weight="bold" textLength="20.3" lengthAdjust="spacingAndGlyphs" >+5V</text>
<text x="40.8" y="331.8" font-size="11" fill="#000" font-weight="bold" textLength="13.2" lengthAdjust="spacingAndGlyphs" >V1</text>
<text x="40.8" y="370.2" font-size="11" fill="#000" font-weight="bold" textLength="6" lengthAdjust="spacingAndGlyphs" >5</text>
<text x="133" y="296.2" font-size="11" fill="#000" font-weight="bold" textLength="11.7" lengthAdjust="spacingAndGlyphs" >L1</text>
<text x="133.6" y="316.3" font-size="11" fill="#000" font-weight="bold" >1</text>
<text x="182" y="296.2" font-size="11" fill="#000" font-weight="bold" textLength="12.4" lengthAdjust="spacingAndGlyphs" >C1</text>
<text x="182" y="319.6" font-size="11" fill="#000" font-weight="bold" textLength="18" lengthAdjust="spacingAndGlyphs" >10µ</text>
<text x="0" y="0" font-size="11" font-weight="bold" fill="#000" textLength="15" lengthAdjust="spacingAndGlyphs" transform="translate(119.9,350.2) rotate(-90)">Ux</text>
<text x="103.9" y="402" font-size="11" fill="#000" font-weight="bold" textLength="12.9" lengthAdjust="spacingAndGlyphs" >M1</text>
<text x="77.5" y="421.2" font-size="11" fill="#000" font-weight="bold" textLength="40.5" lengthAdjust="spacingAndGlyphs" >BSS123</text>
<text x="268.1" y="402" font-size="11" fill="#000" font-weight="bold" textLength="14.8" lengthAdjust="spacingAndGlyphs" >M2</text>
<text x="268.1" y="421.2" font-size="11" fill="#000" font-weight="bold" textLength="40.5" lengthAdjust="spacingAndGlyphs" >BSS123</text>
<text x="188" y="491.8" font-size="11" fill="#000" font-weight="bold" textLength="13.3" lengthAdjust="spacingAndGlyphs" >R1</text>
<text x="188" y="509.3" font-size="11" fill="#000" font-weight="bold" textLength="11.6" lengthAdjust="spacingAndGlyphs" >1k</text>
<text x="11.9" y="547" font-size="11" fill="#000" font-weight="bold" textLength="97.4" lengthAdjust="spacingAndGlyphs" >.tran 100m startup</text>
<rect x="338" y="64.5" width="2" height="647" fill="#3e6464"/>
<path d="M339.5,711.5 V68.5 Q339.5,64.5 343.5,64.5 H1194.5 Q1198.5,64.5 1198.5,68.5 V711.5 Z" fill="#dbe4ee" stroke="#5e6874"/>
<path d="M340,83 V69 Q340,65 344,65 H1194 Q1198,65 1198,69 V83 Z" fill="url(#inaT)"/>
<rect x="344" y="83" width="850" height="623" fill="#ffffff"/>
<rect x="344" y="83" width="849" height="622" fill="#8a9098"/>
<rect x="345" y="84" width="848" height="621" fill="#000"/>
<path d="M345.6,75 L348.4,72.2 L351.2,75 L354,72.2 L356,74.4" stroke="#5050b0" stroke-width="1.2" fill="none"/>
<path d="M345.6,77 H356" stroke="#c09080" stroke-width="1.2" fill="none"/><path d="M345.6,79.4 H356" stroke="#202040" stroke-width="1.2" fill="none"/>
<text x="358.75" y="78.7" font-size="8.5" fill="#3a4a5a" textLength="66.3" lengthAdjust="spacingAndGlyphs" >Ozillator_BSS123.raw</text>
<rect x="1132.5" y="70.5" width="19" height="10" rx="2.5" fill="url(#cbtnI)" stroke="#a4b2c4"/>
<rect x="1152.5" y="70.5" width="19" height="10" rx="2.5" fill="url(#cbtnI)" stroke="#a4b2c4"/>
<rect x="1173.5" y="70.5" width="19" height="10" rx="2.5" fill="url(#cbtnI)" stroke="#a4b2c4"/>
<rect x="1139" y="75" width="6" height="2" rx="0.8" fill="#fff" stroke="#667284" stroke-width="0.9"/>
<rect x="1158.8" y="73.2" width="6.4" height="4.6" rx="1" fill="#fff" stroke="#667284" stroke-width="1.1"/><rect x="1160.5" y="74.8" width="3" height="1.4" fill="#667284"/>
<path d="M1180.5,73 L1185.5,78 M1185.5,73 L1180.5,78" stroke="#667284" stroke-width="2.4"/><path d="M1180.5,73 L1185.5,78 M1185.5,73 L1180.5,78" stroke="#fff" stroke-width="0.8"/>
<path d="M443.16,97 V689 M522.92,97 V689 M602.68,97 V689 M682.44,97 V689 M762.20,97 V689 M841.96,97 V689 M921.72,97 V689 M1001.48,97 V689 M1081.24,97 V689 M364,640.15 H1161 M364,590.70 H1161 M364,541.25 H1161 M364,491.80 H1161 M364,442.35 H1161 M364,392.90 H1161 M364,343.45 H1161 M364,294.00 H1161 M364,244.55 H1161 M364,195.10 H1161 M364,145.65 H1161" stroke="#888888" stroke-width="1" stroke-dasharray="2.1,1.62" fill="none"/>
<path d="M363.40,96.20 V689.60 H1161.00 V96.20 Z" stroke="#a0a0a0" fill="none"/>
<path d="M359,689.60 H363 M1161,689.60 H1165 M359,640.15 H363 M1161,640.15 H1165 M359,590.70 H363 M1161,590.70 H1165 M359,541.25 H363 M1161,541.25 H1165 M359,491.80 H363 M1161,491.80 H1165 M359,442.35 H363 M1161,442.35 H1165 M359,392.90 H363 M1161,392.90 H1165 M359,343.45 H363 M1161,343.45 H1165 M359,294.00 H363 M1161,294.00 H1165 M359,244.55 H363 M1161,244.55 H1165 M359,195.10 H363 M1161,195.10 H1165 M359,145.65 H363 M1161,145.65 H1165 M359,96.20 H363 M1161,96.20 H1165 M363.40,690 V694 M443.16,690 V694 M522.92,690 V694 M602.68,690 V694 M682.44,690 V694 M762.20,690 V694 M841.96,690 V694 M921.72,690 V694 M1001.48,690 V694 M1081.24,690 V694 M1161.00,690 V694" stroke="#a0a0a0" fill="none"/>
<text x="358.3" y="692.2" font-size="8.5" font-weight="bold" fill="#c8c8c8" text-anchor="end">-6V</text>
<text x="1191.6" y="692.2" font-size="8.5" font-weight="bold" fill="#c8c8c8" text-anchor="end" textLength="23.39" lengthAdjust="spacingAndGlyphs">-24mA</text>
<text x="358.3" y="642.8" font-size="8.5" font-weight="bold" fill="#c8c8c8" text-anchor="end">-5V</text>
<text x="1191.6" y="642.8" font-size="8.5" font-weight="bold" fill="#c8c8c8" text-anchor="end" textLength="23.39" lengthAdjust="spacingAndGlyphs">-20mA</text>
<text x="358.3" y="593.3" font-size="8.5" font-weight="bold" fill="#c8c8c8" text-anchor="end">-4V</text>
<text x="1191.6" y="593.3" font-size="8.5" font-weight="bold" fill="#c8c8c8" text-anchor="end" textLength="23.39" lengthAdjust="spacingAndGlyphs">-16mA</text>
<text x="358.3" y="543.9" font-size="8.5" font-weight="bold" fill="#c8c8c8" text-anchor="end">-3V</text>
<text x="1191.6" y="543.9" font-size="8.5" font-weight="bold" fill="#c8c8c8" text-anchor="end" textLength="23.39" lengthAdjust="spacingAndGlyphs">-12mA</text>
<text x="358.3" y="494.4" font-size="8.5" font-weight="bold" fill="#c8c8c8" text-anchor="end">-2V</text>
<text x="1191.6" y="494.4" font-size="8.5" font-weight="bold" fill="#c8c8c8" text-anchor="end" textLength="19.14" lengthAdjust="spacingAndGlyphs">-8mA</text>
<text x="358.3" y="444.9" font-size="8.5" font-weight="bold" fill="#c8c8c8" text-anchor="end">-1V</text>
<text x="1191.6" y="444.9" font-size="8.5" font-weight="bold" fill="#c8c8c8" text-anchor="end" textLength="19.14" lengthAdjust="spacingAndGlyphs">-4mA</text>
<text x="358.3" y="395.5" font-size="8.5" font-weight="bold" fill="#c8c8c8" text-anchor="end">0V</text>
<text x="1191.6" y="395.5" font-size="8.5" font-weight="bold" fill="#c8c8c8" text-anchor="end" textLength="16.59" lengthAdjust="spacingAndGlyphs">0mA</text>
<text x="358.3" y="346.1" font-size="8.5" font-weight="bold" fill="#c8c8c8" text-anchor="end">1V</text>
<text x="1191.6" y="346.1" font-size="8.5" font-weight="bold" fill="#c8c8c8" text-anchor="end" textLength="16.59" lengthAdjust="spacingAndGlyphs">4mA</text>
<text x="358.3" y="296.6" font-size="8.5" font-weight="bold" fill="#c8c8c8" text-anchor="end">2V</text>
<text x="1191.6" y="296.6" font-size="8.5" font-weight="bold" fill="#c8c8c8" text-anchor="end" textLength="16.59" lengthAdjust="spacingAndGlyphs">8mA</text>
<text x="358.3" y="247.1" font-size="8.5" font-weight="bold" fill="#c8c8c8" text-anchor="end">3V</text>
<text x="1191.6" y="247.1" font-size="8.5" font-weight="bold" fill="#c8c8c8" text-anchor="end" textLength="20.84" lengthAdjust="spacingAndGlyphs">12mA</text>
<text x="358.3" y="197.7" font-size="8.5" font-weight="bold" fill="#c8c8c8" text-anchor="end">4V</text>
<text x="1191.6" y="197.7" font-size="8.5" font-weight="bold" fill="#c8c8c8" text-anchor="end" textLength="20.84" lengthAdjust="spacingAndGlyphs">16mA</text>
<text x="358.3" y="148.2" font-size="8.5" font-weight="bold" fill="#c8c8c8" text-anchor="end">5V</text>
<text x="1191.6" y="148.2" font-size="8.5" font-weight="bold" fill="#c8c8c8" text-anchor="end" textLength="20.84" lengthAdjust="spacingAndGlyphs">20mA</text>
<text x="358.3" y="98.8" font-size="8.5" font-weight="bold" fill="#c8c8c8" text-anchor="end">6V</text>
<text x="1191.6" y="98.8" font-size="8.5" font-weight="bold" fill="#c8c8c8" text-anchor="end" textLength="20.84" lengthAdjust="spacingAndGlyphs">24mA</text>
<text x="363.4" y="702.8" font-size="8" font-weight="bold" fill="#c8c8c8" text-anchor="middle" textLength="15.21" lengthAdjust="spacingAndGlyphs">0ms</text>
<text x="443.2" y="702.8" font-size="8" font-weight="bold" fill="#c8c8c8" text-anchor="middle" textLength="19.45" lengthAdjust="spacingAndGlyphs">10ms</text>
<text x="522.9" y="702.8" font-size="8" font-weight="bold" fill="#c8c8c8" text-anchor="middle" textLength="19.45" lengthAdjust="spacingAndGlyphs">20ms</text>
<text x="602.7" y="702.8" font-size="8" font-weight="bold" fill="#c8c8c8" text-anchor="middle" textLength="19.45" lengthAdjust="spacingAndGlyphs">30ms</text>
<text x="682.4" y="702.8" font-size="8" font-weight="bold" fill="#c8c8c8" text-anchor="middle" textLength="19.45" lengthAdjust="spacingAndGlyphs">40ms</text>
<text x="762.2" y="702.8" font-size="8" font-weight="bold" fill="#c8c8c8" text-anchor="middle" textLength="19.45" lengthAdjust="spacingAndGlyphs">50ms</text>
<text x="842.0" y="702.8" font-size="8" font-weight="bold" fill="#c8c8c8" text-anchor="middle" textLength="19.45" lengthAdjust="spacingAndGlyphs">60ms</text>
<text x="921.7" y="702.8" font-size="8" font-weight="bold" fill="#c8c8c8" text-anchor="middle" textLength="19.45" lengthAdjust="spacingAndGlyphs">70ms</text>
<text x="1001.5" y="702.8" font-size="8" font-weight="bold" fill="#c8c8c8" text-anchor="middle" textLength="19.45" lengthAdjust="spacingAndGlyphs">80ms</text>
<text x="1081.2" y="702.8" font-size="8" font-weight="bold" fill="#c8c8c8" text-anchor="middle" textLength="19.45" lengthAdjust="spacingAndGlyphs">90ms</text>
<text x="1161.0" y="702.8" font-size="8" font-weight="bold" fill="#c8c8c8" text-anchor="middle" textLength="23.68" lengthAdjust="spacingAndGlyphs">100ms</text>
<text x="537.5" y="92.5" font-size="8.5" fill="#d03030" font-weight="bold" textLength="49.5" lengthAdjust="spacingAndGlyphs" >V(+5V)-V(Ux)</text>
<text x="961" y="92" font-size="8.5" font-weight="bold" fill="#30c030" text-anchor="middle">I(L1)</text>
<path d="M363.4,392.9 L364.1,391.6 L364.7,390.3 L365.4,389.1 L366.1,387.8 L366.7,386.5 L367.4,385.2 L368.1,384.0 L368.7,382.7 L369.4,381.5 L370.0,380.2 L370.7,379.0 L371.4,377.7 L372.0,376.5 L372.7,375.3 L373.4,374.1 L374.0,372.9 L374.7,371.7 L375.4,370.5 L376.0,369.3 L376.7,368.2 L377.4,367.1 L378.0,365.9 L378.7,364.8 L379.4,363.7 L380.0,362.6 L380.7,361.6 L381.3,360.5 L382.0,359.5 L382.7,358.5 L383.3,357.5 L384.0,356.5 L384.7,355.6 L385.3,354.7 L386.0,353.8 L386.7,352.9 L387.3,352.0 L388.0,351.2 L388.7,350.4 L389.3,349.6 L390.0,348.8 L390.7,348.1 L391.3,347.4 L392.0,346.7 L392.6,346.0 L393.3,345.4 L394.0,344.8 L394.6,344.3 L395.3,343.7 L396.0,343.2 L396.6,342.8 L397.3,342.3 L398.0,341.9 L398.6,341.6 L399.3,341.2 L400.0,340.9 L400.6,340.6 L401.3,340.4 L402.0,340.2 L402.6,340.0 L403.3,339.9 L403.9,339.8 L404.6,339.8 L405.3,339.7 L405.9,339.8 L406.6,339.8 L407.3,339.9 L407.9,340.0 L408.6,340.2 L409.3,340.4 L409.9,340.6 L410.6,340.9 L411.3,341.2 L411.9,341.6 L412.6,342.0 L413.2,342.4 L413.9,342.9 L414.6,343.4 L415.2,343.9 L415.9,344.5 L416.6,345.1 L417.2,345.8 L417.9,346.5 L418.6,347.2 L419.2,348.0 L419.9,348.8 L420.6,349.6 L421.2,350.5 L421.9,351.4 L422.6,352.3 L423.2,353.3 L423.9,354.3 L424.5,355.3 L425.2,356.3 L425.9,357.4 L426.5,358.5 L427.2,359.7 L427.9,360.9 L428.5,362.1 L429.2,363.3 L429.9,364.5 L430.5,365.8 L431.2,367.1 L431.9,368.4 L432.5,369.7 L433.2,371.1 L433.9,372.5 L434.5,373.8 L435.2,375.2 L435.8,376.7 L436.5,378.1 L437.2,379.5 L437.8,381.0 L438.5,382.5 L439.2,383.9 L439.8,385.4 L440.5,386.9 L441.2,388.4 L441.8,389.9 L442.5,391.4 L443.2,392.9 L443.8,395.6 L444.5,398.3 L445.2,401.1 L445.8,403.8 L446.5,406.5 L447.1,409.2 L447.8,411.9 L448.5,414.5 L449.1,417.2 L449.8,419.8 L450.5,422.4 L451.1,425.0 L451.8,427.6 L452.5,430.2 L453.1,432.7 L453.8,435.2 L454.5,437.7 L455.1,440.1 L455.8,442.6 L456.5,444.9 L457.1,447.3 L457.8,449.6 L458.4,451.9 L459.1,454.1 L459.8,456.3 L460.4,458.4 L461.1,460.5 L461.8,462.6 L462.4,464.6 L463.1,466.6 L463.8,468.5 L464.4,470.3 L465.1,472.1 L465.8,473.9 L466.4,475.6 L467.1,477.2 L467.8,478.8 L468.4,480.4 L469.1,481.8 L469.7,483.3 L470.4,484.6 L471.1,485.9 L471.7,487.1 L472.4,488.3 L473.1,489.4 L473.7,490.4 L474.4,491.4 L475.1,492.3 L475.7,493.1 L476.4,493.9 L477.1,494.6 L477.7,495.2 L478.4,495.8 L479.1,496.3 L479.7,496.7 L480.4,497.0 L481.0,497.3 L481.7,497.5 L482.4,497.7 L483.0,497.7 L483.7,497.7 L484.4,497.7 L485.0,497.5 L485.7,497.3 L486.4,497.0 L487.0,496.7 L487.7,496.2 L488.4,495.7 L489.0,495.2 L489.7,494.5 L490.4,493.8 L491.0,493.1 L491.7,492.2 L492.3,491.3 L493.0,490.4 L493.7,489.3 L494.3,488.2 L495.0,487.1 L495.7,485.8 L496.3,484.5 L497.0,483.2 L497.7,481.8 L498.3,480.3 L499.0,478.8 L499.7,477.2 L500.3,475.5 L501.0,473.8 L501.7,472.1 L502.3,470.3 L503.0,468.4 L503.6,466.5 L504.3,464.5 L505.0,462.5 L505.6,460.5 L506.3,458.3 L507.0,456.2 L507.6,454.0 L508.3,451.8 L509.0,449.5 L509.6,447.2 L510.3,444.8 L511.0,442.5 L511.6,440.0 L512.3,437.6 L513.0,435.1 L513.6,432.6 L514.3,430.1 L514.9,427.5 L515.6,424.9 L516.3,422.3 L516.9,419.7 L517.6,417.1 L518.3,414.4 L518.9,411.7 L519.6,409.1 L520.3,406.4 L520.9,403.7 L521.6,401.0 L522.3,398.2 L522.9,395.5 L523.6,392.7 L524.2,388.4 L524.9,384.0 L525.6,379.6 L526.2,375.3 L526.9,371.0 L527.6,366.7 L528.2,362.4 L528.9,358.1 L529.6,353.9 L530.2,349.8 L530.9,345.6 L531.6,341.5 L532.2,337.5 L532.9,333.5 L533.6,329.6 L534.2,325.7 L534.9,321.9 L535.5,318.2 L536.2,314.5 L536.9,310.9 L537.5,307.4 L538.2,304.0 L538.9,300.6 L539.5,297.3 L540.2,294.2 L540.9,291.1 L541.5,288.1 L542.2,285.2 L542.9,282.4 L543.5,279.7 L544.2,277.1 L544.9,274.6 L545.5,272.2 L546.2,269.9 L546.8,267.7 L547.5,265.7 L548.2,263.7 L548.8,261.9 L549.5,260.1 L550.2,258.5 L550.8,257.0 L551.5,255.6 L552.2,254.3 L552.8,253.1 L553.5,252.0 L554.2,251.1 L554.8,250.3 L555.5,249.5 L556.2,248.9 L556.8,248.4 L557.5,248.0 L558.1,247.8 L558.8,247.6 L559.5,247.5 L560.1,247.6 L560.8,247.7 L561.5,248.0 L562.1,248.3 L562.8,248.8 L563.5,249.4 L564.1,250.0 L564.8,250.8 L565.5,251.6 L566.1,252.6 L566.8,253.6 L567.5,254.8 L568.1,256.0 L568.8,257.3 L569.4,258.7 L570.1,260.2 L570.8,261.7 L571.4,263.4 L572.1,265.1 L572.8,266.9 L573.4,268.8 L574.1,270.7 L574.8,272.8 L575.4,274.9 L576.1,277.0 L576.8,279.2 L577.4,281.5 L578.1,283.9 L578.8,286.3 L579.4,288.7 L580.1,291.2 L580.7,293.8 L581.4,296.4 L582.1,299.1 L582.7,301.8 L583.4,304.6 L584.1,307.4 L584.7,310.2 L585.4,313.1 L586.1,316.0 L586.7,319.0 L587.4,322.0 L588.1,325.0 L588.7,328.1 L589.4,331.2 L590.1,334.3 L590.7,337.5 L591.4,340.6 L592.0,343.8 L592.7,347.1 L593.4,350.3 L594.0,353.6 L594.7,356.8 L595.4,360.1 L596.0,363.4 L596.7,366.7 L597.4,370.1 L598.0,373.4 L598.7,376.8 L599.4,380.1 L600.0,383.5 L600.7,386.8 L601.4,390.2 L602.0,393.9 L602.7,398.7 L603.3,403.6 L604.0,408.5 L604.7,413.3 L605.3,418.2 L606.0,423.0 L606.7,427.8 L607.3,432.6 L608.0,437.3 L608.7,442.0 L609.3,446.7 L610.0,451.3 L610.7,455.9 L611.3,460.5 L612.0,465.0 L612.6,469.5 L613.3,473.9 L614.0,478.3 L614.6,482.6 L615.3,486.8 L616.0,491.0 L616.6,495.1 L617.3,499.1 L618.0,503.1 L618.6,507.0 L619.3,510.8 L620.0,514.5 L620.6,518.2 L621.3,521.7 L622.0,525.2 L622.6,528.6 L623.3,531.9 L623.9,535.1 L624.6,538.2 L625.3,541.2 L625.9,544.1 L626.6,546.8 L627.3,549.5 L627.9,552.1 L628.6,554.6 L629.3,556.9 L629.9,559.2 L630.6,561.3 L631.3,563.3 L631.9,565.2 L632.6,567.0 L633.3,568.7 L633.9,570.2 L634.6,571.6 L635.2,572.9 L635.9,574.1 L636.6,575.2 L637.2,576.1 L637.9,576.9 L638.6,577.6 L639.2,578.1 L639.9,578.5 L640.6,578.8 L641.2,579.0 L641.9,579.0 L642.6,578.9 L643.2,578.7 L643.9,578.4 L644.6,577.9 L645.2,577.3 L645.9,576.6 L646.5,575.7 L647.2,574.8 L647.9,573.7 L648.5,572.4 L649.2,571.1 L649.9,569.6 L650.5,568.0 L651.2,566.3 L651.9,564.5 L652.5,562.5 L653.2,560.5 L653.9,558.3 L654.5,556.0 L655.2,553.6 L655.9,551.1 L656.5,548.5 L657.2,545.7 L657.8,542.9 L658.5,540.0 L659.2,536.9 L659.8,533.8 L660.5,530.6 L661.2,527.2 L661.8,523.8 L662.5,520.3 L663.2,516.7 L663.8,513.0 L664.5,509.3 L665.2,505.4 L665.8,501.5 L666.5,497.5 L667.2,493.5 L667.8,489.3 L668.5,485.1 L669.1,480.9 L669.8,476.5 L670.5,472.2 L671.1,467.7 L671.8,463.2 L672.5,458.7 L673.1,454.1 L673.8,449.5 L674.5,444.8 L675.1,440.1 L675.8,435.4 L676.5,430.6 L677.1,425.9 L677.8,421.1 L678.5,416.2 L679.1,411.4 L679.8,406.5 L680.4,401.7 L681.1,396.8 L681.8,391.7 L682.4,385.5 L683.1,379.3 L683.8,373.2 L684.4,367.0 L685.1,360.9 L685.8,354.8 L686.4,348.8 L687.1,342.8 L687.8,336.8 L688.4,330.9 L689.1,325.1 L689.8,319.3 L690.4,313.6 L691.1,307.9 L691.7,302.4 L692.4,296.9 L693.1,291.5 L693.7,286.2 L694.4,281.0 L695.1,275.9 L695.7,270.9 L696.4,266.0 L697.1,261.2 L697.7,256.5 L698.4,252.0 L699.1,247.6 L699.7,243.3 L700.4,239.1 L701.1,235.1 L701.7,231.2 L702.4,227.4 L703.0,223.8 L703.7,220.4 L704.4,217.0 L705.0,213.9 L705.7,210.8 L706.4,208.0 L707.0,205.2 L707.7,202.7 L708.4,200.2 L709.0,198.0 L709.7,195.9 L710.4,193.9 L711.0,192.1 L711.7,190.5 L712.3,189.0 L713.0,187.7 L713.7,186.5 L714.3,185.5 L715.0,184.6 L715.7,183.9 L716.3,183.4 L717.0,182.9 L717.7,182.7 L718.3,182.6 L719.0,182.6 L719.7,182.8 L720.3,183.2 L721.0,183.6 L721.7,184.3 L722.3,185.0 L723.0,185.9 L723.6,187.0 L724.3,188.1 L725.0,189.4 L725.6,190.9 L726.3,192.4 L727.0,194.1 L727.6,195.9 L728.3,197.8 L729.0,199.9 L729.6,202.0 L730.3,204.3 L731.0,206.7 L731.6,209.2 L732.3,211.8 L733.0,214.5 L733.6,217.3 L734.3,220.2 L734.9,223.1 L735.6,226.2 L736.3,229.4 L736.9,232.6 L737.6,236.0 L738.3,239.4 L738.9,242.9 L739.6,246.4 L740.3,250.1 L740.9,253.8 L741.6,257.6 L742.3,261.4 L742.9,265.3 L743.6,269.3 L744.3,273.3 L744.9,277.4 L745.6,281.5 L746.2,285.7 L746.9,290.0 L747.6,294.3 L748.2,298.6 L748.9,302.9 L749.6,307.4 L750.2,311.8 L750.9,316.3 L751.6,320.8 L752.2,325.3 L752.9,329.9 L753.6,334.5 L754.2,339.1 L754.9,343.8 L755.6,348.4 L756.2,353.1 L756.9,357.8 L757.5,362.5 L758.2,367.2 L758.9,372.0 L759.5,376.7 L760.2,381.5 L760.9,386.2 L761.5,391.0 L762.2,396.6 L762.9,402.8 L763.5,409.1 L764.2,415.3 L764.9,421.4 L765.5,427.6 L766.2,433.7 L766.9,439.9 L767.5,445.9 L768.2,452.0 L768.8,458.0 L769.5,463.9 L770.2,469.8 L770.8,475.7 L771.5,481.5 L772.2,487.2 L772.8,492.9 L773.5,498.5 L774.2,504.0 L774.8,509.5 L775.5,514.8 L776.2,520.1 L776.8,525.3 L777.5,530.4 L778.2,535.4 L778.8,540.3 L779.5,545.2 L780.1,549.9 L780.8,554.5 L781.5,558.9 L782.1,563.3 L782.8,567.6 L783.5,571.7 L784.1,575.7 L784.8,579.6 L785.5,583.3 L786.1,586.9 L786.8,590.4 L787.5,593.8 L788.1,597.0 L788.8,600.0 L789.5,603.0 L790.1,605.7 L790.8,608.4 L791.4,610.9 L792.1,613.2 L792.8,615.4 L793.4,617.4 L794.1,619.3 L794.8,621.0 L795.4,622.5 L796.1,623.9 L796.8,625.2 L797.4,626.2 L798.1,627.1 L798.8,627.9 L799.4,628.5 L800.1,628.9 L800.8,629.2 L801.4,629.3 L802.1,629.2 L802.7,629.0 L803.4,628.6 L804.1,628.0 L804.7,627.3 L805.4,626.4 L806.1,625.4 L806.7,624.2 L807.4,622.8 L808.1,621.3 L808.7,619.6 L809.4,617.8 L810.1,615.8 L810.7,613.6 L811.4,611.3 L812.0,608.9 L812.7,606.3 L813.4,603.5 L814.0,600.6 L814.7,597.6 L815.4,594.4 L816.0,591.1 L816.7,587.6 L817.4,584.1 L818.0,580.3 L818.7,576.5 L819.4,572.5 L820.0,568.4 L820.7,564.2 L821.4,559.8 L822.0,555.4 L822.7,550.8 L823.3,546.1 L824.0,541.3 L824.7,536.4 L825.3,531.4 L826.0,526.3 L826.7,521.2 L827.3,515.9 L828.0,510.5 L828.7,505.1 L829.3,499.6 L830.0,494.0 L830.7,488.4 L831.3,482.6 L832.0,476.9 L832.7,471.0 L833.3,465.1 L834.0,459.2 L834.6,453.2 L835.3,447.1 L836.0,441.1 L836.6,435.0 L837.3,428.8 L838.0,422.7 L838.6,416.5 L839.3,410.3 L840.0,404.1 L840.6,397.9 L841.3,391.4 L842.0,384.0 L842.6,376.6 L843.3,369.2 L844.0,361.9 L844.6,354.5 L845.3,347.2 L845.9,340.0 L846.6,332.8 L847.3,325.6 L847.9,318.5 L848.6,311.5 L849.3,304.6 L849.9,297.7 L850.6,291.0 L851.3,284.3 L851.9,277.7 L852.6,271.3 L853.3,264.9 L853.9,258.7 L854.6,252.5 L855.3,246.6 L855.9,240.7 L856.6,235.0 L857.2,229.4 L857.9,224.0 L858.6,218.7 L859.2,213.6 L859.9,208.6 L860.6,203.8 L861.2,199.1 L861.9,194.7 L862.6,190.4 L863.2,186.2 L863.9,182.3 L864.6,178.5 L865.2,174.9 L865.9,171.5 L866.6,168.2 L867.2,165.2 L867.9,162.3 L868.5,159.6 L869.2,157.1 L869.9,154.8 L870.5,152.7 L871.2,150.8 L871.9,149.1 L872.5,147.5 L873.2,146.1 L873.9,145.0 L874.5,144.0 L875.2,143.2 L875.9,142.6 L876.5,142.1 L877.2,141.9 L877.9,141.8 L878.5,141.9 L879.2,142.2 L879.8,142.6 L880.5,143.3 L881.2,144.1 L881.8,145.0 L882.5,146.2 L883.2,147.4 L883.8,148.9 L884.5,150.5 L885.2,152.3 L885.8,154.2 L886.5,156.3 L887.2,158.5 L887.8,160.8 L888.5,163.3 L889.2,166.0 L889.8,168.8 L890.5,171.7 L891.1,174.7 L891.8,177.9 L892.5,181.1 L893.1,184.5 L893.8,188.0 L894.5,191.7 L895.1,195.4 L895.8,199.2 L896.5,203.2 L897.1,207.2 L897.8,211.4 L898.5,215.6 L899.1,219.9 L899.8,224.3 L900.5,228.8 L901.1,233.4 L901.8,238.0 L902.4,242.8 L903.1,247.6 L903.8,252.4 L904.4,257.4 L905.1,262.3 L905.8,267.4 L906.4,272.5 L907.1,277.7 L907.8,282.9 L908.4,288.2 L909.1,293.5 L909.8,298.8 L910.4,304.2 L911.1,309.6 L911.8,315.1 L912.4,320.6 L913.1,326.1 L913.7,331.7 L914.4,337.3 L915.1,342.9 L915.7,348.5 L916.4,354.2 L917.1,359.9 L917.7,365.5 L918.4,371.2 L919.1,376.9 L919.7,382.6 L920.4,388.3 L921.1,394.3 L921.7,401.4 L922.4,408.5 L923.0,415.6 L923.7,422.7 L924.4,429.7 L925.0,436.8 L925.7,443.8 L926.4,450.7 L927.0,457.6 L927.7,464.5 L928.4,471.3 L929.0,478.1 L929.7,484.8 L930.4,491.4 L931.0,498.0 L931.7,504.5 L932.4,510.9 L933.0,517.3 L933.7,523.5 L934.3,529.7 L935.0,535.7 L935.7,541.7 L936.3,547.5 L937.0,553.3 L937.7,558.9 L938.3,564.4 L939.0,569.8 L939.7,575.1 L940.3,580.2 L941.0,585.2 L941.7,590.1 L942.3,594.8 L943.0,599.4 L943.7,603.8 L944.3,608.1 L945.0,612.3 L945.6,616.2 L946.3,620.1 L947.0,623.7 L947.6,627.2 L948.3,630.6 L949.0,633.8 L949.6,636.8 L950.3,639.6 L951.0,642.2 L951.6,644.7 L952.3,647.0 L953.0,649.1 L953.6,651.1 L954.3,652.8 L955.0,654.4 L955.6,655.8 L956.3,657.0 L956.9,658.0 L957.6,658.8 L958.3,659.5 L958.9,659.9 L959.6,660.2 L960.3,660.3 L960.9,660.2 L961.6,659.9 L962.3,659.4 L962.9,658.7 L963.6,657.8 L964.3,656.8 L964.9,655.5 L965.6,654.1 L966.3,652.5 L966.9,650.7 L967.6,648.7 L968.2,646.6 L968.9,644.2 L969.6,641.7 L970.2,639.0 L970.9,636.2 L971.6,633.1 L972.2,629.9 L972.9,626.6 L973.6,623.0 L974.2,619.3 L974.9,615.5 L975.6,611.4 L976.2,607.3 L976.9,603.0 L977.6,598.5 L978.2,593.9 L978.9,589.1 L979.5,584.2 L980.2,579.2 L980.9,574.0 L981.5,568.7 L982.2,563.3 L982.9,557.8 L983.5,552.1 L984.2,546.4 L984.9,540.5 L985.5,534.5 L986.2,528.4 L986.9,522.3 L987.5,516.0 L988.2,509.6 L988.9,503.2 L989.5,496.7 L990.2,490.1 L990.8,483.5 L991.5,476.7 L992.2,470.0 L992.8,463.1 L993.5,456.3 L994.2,449.3 L994.8,442.4 L995.5,435.4 L996.2,428.3 L996.8,421.3 L997.5,414.2 L998.2,407.1 L998.8,400.0 L999.5,392.9 L1000.2,384.8 L1000.8,376.7 L1001.5,368.6 L1002.1,360.5 L1002.8,352.4 L1003.5,344.4 L1004.1,336.5 L1004.8,328.5 L1005.5,320.7 L1006.1,312.9 L1006.8,305.2 L1007.5,297.6 L1008.1,290.0 L1008.8,282.6 L1009.5,275.2 L1010.1,268.0 L1010.8,260.9 L1011.4,253.9 L1012.1,247.0 L1012.8,240.3 L1013.4,233.7 L1014.1,227.2 L1014.8,220.9 L1015.4,214.7 L1016.1,208.7 L1016.8,202.9 L1017.4,197.2 L1018.1,191.7 L1018.8,186.4 L1019.4,181.3 L1020.1,176.3 L1020.8,171.6 L1021.4,167.0 L1022.1,162.6 L1022.7,158.4 L1023.4,154.4 L1024.1,150.6 L1024.7,147.0 L1025.4,143.6 L1026.1,140.4 L1026.7,137.4 L1027.4,134.6 L1028.1,132.0 L1028.7,129.6 L1029.4,127.5 L1030.1,125.5 L1030.7,123.7 L1031.4,122.2 L1032.1,120.8 L1032.7,119.7 L1033.4,118.7 L1034.0,118.0 L1034.7,117.5 L1035.4,117.1 L1036.0,117.0 L1036.7,117.0 L1037.4,117.3 L1038.0,117.7 L1038.7,118.3 L1039.4,119.2 L1040.0,120.2 L1040.7,121.3 L1041.4,122.7 L1042.0,124.2 L1042.7,125.9 L1043.4,127.8 L1044.0,129.9 L1044.7,132.1 L1045.3,134.5 L1046.0,137.0 L1046.7,139.7 L1047.3,142.5 L1048.0,145.5 L1048.7,148.7 L1049.3,151.9 L1050.0,155.4 L1050.7,158.9 L1051.3,162.6 L1052.0,166.4 L1052.7,170.3 L1053.3,174.4 L1054.0,178.6 L1054.7,182.8 L1055.3,187.2 L1056.0,191.7 L1056.6,196.3 L1057.3,201.0 L1058.0,205.8 L1058.6,210.7 L1059.3,215.7 L1060.0,220.8 L1060.6,225.9 L1061.3,231.1 L1062.0,236.5 L1062.6,241.8 L1063.3,247.3 L1064.0,252.8 L1064.6,258.4 L1065.3,264.0 L1066.0,269.7 L1066.6,275.5 L1067.3,281.3 L1067.9,287.1 L1068.6,293.0 L1069.3,299.0 L1069.9,304.9 L1070.6,311.0 L1071.3,317.0 L1071.9,323.1 L1072.6,329.2 L1073.3,335.4 L1073.9,341.5 L1074.6,347.7 L1075.3,353.9 L1075.9,360.1 L1076.6,366.4 L1077.3,372.6 L1077.9,378.9 L1078.6,385.1 L1079.2,391.4 L1079.9,398.6 L1080.6,406.2 L1081.2,413.7 L1081.9,421.2 L1082.6,428.7 L1083.2,436.1 L1083.9,443.6 L1084.6,451.0 L1085.2,458.3 L1085.9,465.6 L1086.6,472.9 L1087.2,480.1 L1087.9,487.2 L1088.6,494.3 L1089.2,501.3 L1089.9,508.3 L1090.5,515.1 L1091.2,521.9 L1091.9,528.6 L1092.5,535.1 L1093.2,541.6 L1093.9,548.0 L1094.5,554.3 L1095.2,560.5 L1095.9,566.5 L1096.5,572.4 L1097.2,578.2 L1097.9,583.9 L1098.5,589.5 L1099.2,594.9 L1099.9,600.1 L1100.5,605.3 L1101.2,610.2 L1101.8,615.1 L1102.5,619.8 L1103.2,624.3 L1103.8,628.6 L1104.5,632.8 L1105.2,636.8 L1105.8,640.7 L1106.5,644.4 L1107.2,647.9 L1107.8,651.2 L1108.5,654.4 L1109.2,657.4 L1109.8,660.2 L1110.5,662.8 L1111.2,665.2 L1111.8,667.4 L1112.5,669.5 L1113.1,671.3 L1113.8,673.0 L1114.5,674.5 L1115.1,675.7 L1115.8,676.8 L1116.5,677.7 L1117.1,678.4 L1117.8,678.8 L1118.5,679.1 L1119.1,679.2 L1119.8,679.1 L1120.5,678.8 L1121.1,678.3 L1121.8,677.6 L1122.4,676.7 L1123.1,675.6 L1123.8,674.3 L1124.4,672.8 L1125.1,671.1 L1125.8,669.2 L1126.4,667.2 L1127.1,664.9 L1127.8,662.5 L1128.4,659.8 L1129.1,657.0 L1129.8,654.0 L1130.4,650.9 L1131.1,647.5 L1131.8,644.0 L1132.4,640.3 L1133.1,636.4 L1133.7,632.3 L1134.4,628.1 L1135.1,623.7 L1135.7,619.2 L1136.4,614.5 L1137.1,609.7 L1137.7,604.7 L1138.4,599.5 L1139.1,594.2 L1139.7,588.8 L1140.4,583.2 L1141.1,577.6 L1141.7,571.7 L1142.4,565.8 L1143.1,559.7 L1143.7,553.5 L1144.4,547.3 L1145.0,540.9 L1145.7,534.4 L1146.4,527.8 L1147.0,521.1 L1147.7,514.3 L1148.4,507.4 L1149.0,500.5 L1149.7,493.5 L1150.4,486.4 L1151.0,479.2 L1151.7,472.0 L1152.4,464.7 L1153.0,457.4 L1153.7,450.1 L1154.4,442.7 L1155.0,435.2 L1155.7,427.8 L1156.3,420.3 L1157.0,412.8 L1157.7,405.3 L1158.3,397.7 L1159.0,389.8 L1159.7,381.3 L1160.3,372.8 L1161.0,364.3" stroke="#a02e2e" stroke-width="1.1" fill="none" clip-path="url(#pc)"/>
<path d="M363.4,392.9 L364.1,392.9 L364.7,392.8 L365.4,392.8 L366.1,392.7 L366.7,392.6 L367.4,392.4 L368.1,392.3 L368.7,392.1 L369.4,391.8 L370.0,391.6 L370.7,391.3 L371.4,391.0 L372.0,390.7 L372.7,390.3 L373.4,390.0 L374.0,389.6 L374.7,389.1 L375.4,388.7 L376.0,388.2 L376.7,387.7 L377.4,387.2 L378.0,386.7 L378.7,386.1 L379.4,385.5 L380.0,384.9 L380.7,384.3 L381.3,383.6 L382.0,382.9 L382.7,382.2 L383.3,381.5 L384.0,380.8 L384.7,380.0 L385.3,379.2 L386.0,378.5 L386.7,377.6 L387.3,376.8 L388.0,376.0 L388.7,375.1 L389.3,374.2 L390.0,373.3 L390.7,372.4 L391.3,371.5 L392.0,370.5 L392.6,369.6 L393.3,368.6 L394.0,367.6 L394.6,366.6 L395.3,365.6 L396.0,364.6 L396.6,363.6 L397.3,362.5 L398.0,361.5 L398.6,360.4 L399.3,359.4 L400.0,358.3 L400.6,357.2 L401.3,356.2 L402.0,355.1 L402.6,354.0 L403.3,352.9 L403.9,351.8 L404.6,350.7 L405.3,349.6 L405.9,348.5 L406.6,347.4 L407.3,346.4 L407.9,345.3 L408.6,344.2 L409.3,343.1 L409.9,342.0 L410.6,340.9 L411.3,339.9 L411.9,338.8 L412.6,337.8 L413.2,336.7 L413.9,335.7 L414.6,334.7 L415.2,333.7 L415.9,332.7 L416.6,331.7 L417.2,330.7 L417.9,329.7 L418.6,328.8 L419.2,327.9 L419.9,326.9 L420.6,326.0 L421.2,325.2 L421.9,324.3 L422.6,323.4 L423.2,322.6 L423.9,321.8 L424.5,321.0 L425.2,320.3 L425.9,319.5 L426.5,318.8 L427.2,318.1 L427.9,317.4 L428.5,316.8 L429.2,316.2 L429.9,315.6 L430.5,315.0 L431.2,314.5 L431.9,313.9 L432.5,313.5 L433.2,313.0 L433.9,312.6 L434.5,312.2 L435.2,311.8 L435.8,311.4 L436.5,311.1 L437.2,310.8 L437.8,310.6 L438.5,310.3 L439.2,310.1 L439.8,310.0 L440.5,309.8 L441.2,309.7 L441.8,309.6 L442.5,309.6 L443.2,309.6 L443.8,309.6 L444.5,309.7 L445.2,309.8 L445.8,310.0 L446.5,310.3 L447.1,310.6 L447.8,310.9 L448.5,311.4 L449.1,311.8 L449.8,312.4 L450.5,312.9 L451.1,313.6 L451.8,314.3 L452.5,315.0 L453.1,315.8 L453.8,316.6 L454.5,317.5 L455.1,318.5 L455.8,319.5 L456.5,320.5 L457.1,321.6 L457.8,322.8 L458.4,323.9 L459.1,325.2 L459.8,326.5 L460.4,327.8 L461.1,329.2 L461.8,330.6 L462.4,332.0 L463.1,333.5 L463.8,335.0 L464.4,336.6 L465.1,338.2 L465.8,339.9 L466.4,341.6 L467.1,343.3 L467.8,345.0 L468.4,346.8 L469.1,348.6 L469.7,350.5 L470.4,352.3 L471.1,354.2 L471.7,356.1 L472.4,358.1 L473.1,360.1 L473.7,362.1 L474.4,364.1 L475.1,366.1 L475.7,368.2 L476.4,370.2 L477.1,372.3 L477.7,374.4 L478.4,376.5 L479.1,378.6 L479.7,380.8 L480.4,382.9 L481.0,385.0 L481.7,387.2 L482.4,389.3 L483.0,391.5 L483.7,393.6 L484.4,395.8 L485.0,398.0 L485.7,400.1 L486.4,402.2 L487.0,404.4 L487.7,406.5 L488.4,408.6 L489.0,410.7 L489.7,412.8 L490.4,414.9 L491.0,417.0 L491.7,419.0 L492.3,421.1 L493.0,423.1 L493.7,425.1 L494.3,427.0 L495.0,429.0 L495.7,430.9 L496.3,432.8 L497.0,434.7 L497.7,436.5 L498.3,438.3 L499.0,440.1 L499.7,441.9 L500.3,443.6 L501.0,445.3 L501.7,446.9 L502.3,448.5 L503.0,450.1 L503.6,451.6 L504.3,453.1 L505.0,454.6 L505.6,456.0 L506.3,457.3 L507.0,458.7 L507.6,459.9 L508.3,461.2 L509.0,462.4 L509.6,463.5 L510.3,464.6 L511.0,465.6 L511.6,466.6 L512.3,467.6 L513.0,468.5 L513.6,469.3 L514.3,470.1 L514.9,470.8 L515.6,471.5 L516.3,472.1 L516.9,472.7 L517.6,473.2 L518.3,473.7 L518.9,474.1 L519.6,474.5 L520.3,474.8 L520.9,475.0 L521.6,475.2 L522.3,475.4 L522.9,475.5 L523.6,475.5 L524.2,475.4 L524.9,475.3 L525.6,475.1 L526.2,474.7 L526.9,474.3 L527.6,473.8 L528.2,473.2 L528.9,472.5 L529.6,471.7 L530.2,470.8 L530.9,469.9 L531.6,468.8 L532.2,467.7 L532.9,466.5 L533.6,465.2 L534.2,463.8 L534.9,462.3 L535.5,460.8 L536.2,459.1 L536.9,457.4 L537.5,455.7 L538.2,453.8 L538.9,451.9 L539.5,449.9 L540.2,447.8 L540.9,445.7 L541.5,443.5 L542.2,441.2 L542.9,438.9 L543.5,436.5 L544.2,434.1 L544.9,431.6 L545.5,429.1 L546.2,426.5 L546.8,423.9 L547.5,421.2 L548.2,418.5 L548.8,415.7 L549.5,412.9 L550.2,410.0 L550.8,407.2 L551.5,404.3 L552.2,401.3 L552.8,398.4 L553.5,395.4 L554.2,392.4 L554.8,389.4 L555.5,386.3 L556.2,383.3 L556.8,380.2 L557.5,377.1 L558.1,374.1 L558.8,371.0 L559.5,367.9 L560.1,364.8 L560.8,361.7 L561.5,358.6 L562.1,355.6 L562.8,352.5 L563.5,349.4 L564.1,346.4 L564.8,343.4 L565.5,340.4 L566.1,337.4 L566.8,334.4 L567.5,331.4 L568.1,328.5 L568.8,325.6 L569.4,322.8 L570.1,319.9 L570.8,317.1 L571.4,314.4 L572.1,311.6 L572.8,308.9 L573.4,306.3 L574.1,303.6 L574.8,301.1 L575.4,298.5 L576.1,296.1 L576.8,293.6 L577.4,291.2 L578.1,288.9 L578.8,286.6 L579.4,284.4 L580.1,282.2 L580.7,280.0 L581.4,278.0 L582.1,275.9 L582.7,274.0 L583.4,272.1 L584.1,270.2 L584.7,268.4 L585.4,266.7 L586.1,265.0 L586.7,263.4 L587.4,261.9 L588.1,260.4 L588.7,259.0 L589.4,257.7 L590.1,256.4 L590.7,255.2 L591.4,254.0 L592.0,253.0 L592.7,252.0 L593.4,251.0 L594.0,250.1 L594.7,249.3 L595.4,248.6 L596.0,248.0 L596.7,247.4 L597.4,246.8 L598.0,246.4 L598.7,246.0 L599.4,245.7 L600.0,245.5 L600.7,245.3 L601.4,245.2 L602.0,245.2 L602.7,245.3 L603.3,245.4 L604.0,245.7 L604.7,246.1 L605.3,246.6 L606.0,247.1 L606.7,247.8 L607.3,248.6 L608.0,249.4 L608.7,250.4 L609.3,251.5 L610.0,252.6 L610.7,253.9 L611.3,255.3 L612.0,256.7 L612.6,258.2 L613.3,259.9 L614.0,261.6 L614.6,263.4 L615.3,265.3 L616.0,267.3 L616.6,269.4 L617.3,271.5 L618.0,273.8 L618.6,276.1 L619.3,278.5 L620.0,281.0 L620.6,283.5 L621.3,286.2 L622.0,288.9 L622.6,291.7 L623.3,294.5 L623.9,297.4 L624.6,300.4 L625.3,303.4 L625.9,306.5 L626.6,309.7 L627.3,312.9 L627.9,316.2 L628.6,319.5 L629.3,322.9 L629.9,326.3 L630.6,329.8 L631.3,333.3 L631.9,336.8 L632.6,340.4 L633.3,344.0 L633.9,347.7 L634.6,351.4 L635.2,355.1 L635.9,358.8 L636.6,362.6 L637.2,366.4 L637.9,370.2 L638.6,374.0 L639.2,377.9 L639.9,381.7 L640.6,385.5 L641.2,389.4 L641.9,393.3 L642.6,397.1 L643.2,401.0 L643.9,404.8 L644.6,408.6 L645.2,412.5 L645.9,416.3 L646.5,420.1 L647.2,423.9 L647.9,427.6 L648.5,431.3 L649.2,435.1 L649.9,438.7 L650.5,442.4 L651.2,446.0 L651.9,449.6 L652.5,453.1 L653.2,456.6 L653.9,460.0 L654.5,463.4 L655.2,466.8 L655.9,470.1 L656.5,473.3 L657.2,476.5 L657.8,479.7 L658.5,482.8 L659.2,485.8 L659.8,488.7 L660.5,491.6 L661.2,494.4 L661.8,497.2 L662.5,499.8 L663.2,502.4 L663.8,505.0 L664.5,507.4 L665.2,509.8 L665.8,512.1 L666.5,514.3 L667.2,516.4 L667.8,518.5 L668.5,520.4 L669.1,522.3 L669.8,524.1 L670.5,525.7 L671.1,527.3 L671.8,528.8 L672.5,530.3 L673.1,531.6 L673.8,532.8 L674.5,533.9 L675.1,534.9 L675.8,535.9 L676.5,536.7 L677.1,537.4 L677.8,538.1 L678.5,538.6 L679.1,539.0 L679.8,539.4 L680.4,539.6 L681.1,539.7 L681.8,539.8 L682.4,539.7 L683.1,539.5 L683.8,539.1 L684.4,538.6 L685.1,538.0 L685.8,537.3 L686.4,536.4 L687.1,535.5 L687.8,534.4 L688.4,533.1 L689.1,531.8 L689.8,530.3 L690.4,528.7 L691.1,527.0 L691.7,525.2 L692.4,523.2 L693.1,521.2 L693.7,519.0 L694.4,516.7 L695.1,514.4 L695.7,511.9 L696.4,509.3 L697.1,506.6 L697.7,503.8 L698.4,500.9 L699.1,497.9 L699.7,494.9 L700.4,491.7 L701.1,488.5 L701.7,485.1 L702.4,481.7 L703.0,478.2 L703.7,474.7 L704.4,471.1 L705.0,467.4 L705.7,463.6 L706.4,459.8 L707.0,455.9 L707.7,452.0 L708.4,448.0 L709.0,444.0 L709.7,439.9 L710.4,435.8 L711.0,431.6 L711.7,427.4 L712.3,423.2 L713.0,418.9 L713.7,414.6 L714.3,410.3 L715.0,406.0 L715.7,401.6 L716.3,397.3 L717.0,392.9 L717.7,388.5 L718.3,384.2 L719.0,379.8 L719.7,375.4 L720.3,371.0 L721.0,366.7 L721.7,362.3 L722.3,358.0 L723.0,353.7 L723.6,349.4 L724.3,345.1 L725.0,340.9 L725.6,336.6 L726.3,332.4 L727.0,328.3 L727.6,324.2 L728.3,320.1 L729.0,316.1 L729.6,312.1 L730.3,308.1 L731.0,304.2 L731.6,300.4 L732.3,296.6 L733.0,292.8 L733.6,289.1 L734.3,285.5 L734.9,281.9 L735.6,278.4 L736.3,275.0 L736.9,271.6 L737.6,268.3 L738.3,265.1 L738.9,261.9 L739.6,258.9 L740.3,255.8 L740.9,252.9 L741.6,250.1 L742.3,247.3 L742.9,244.6 L743.6,242.0 L744.3,239.4 L744.9,237.0 L745.6,234.6 L746.2,232.3 L746.9,230.2 L747.6,228.1 L748.2,226.1 L748.9,224.1 L749.6,222.3 L750.2,220.6 L750.9,218.9 L751.6,217.4 L752.2,215.9 L752.9,214.6 L753.6,213.3 L754.2,212.1 L754.9,211.1 L755.6,210.1 L756.2,209.2 L756.9,208.4 L757.5,207.8 L758.2,207.2 L758.9,206.7 L759.5,206.3 L760.2,206.0 L760.9,205.8 L761.5,205.7 L762.2,205.8 L762.9,205.9 L763.5,206.2 L764.2,206.6 L764.9,207.1 L765.5,207.8 L766.2,208.5 L766.9,209.5 L767.5,210.5 L768.2,211.7 L768.8,213.0 L769.5,214.4 L770.2,215.9 L770.8,217.6 L771.5,219.4 L772.2,221.3 L772.8,223.3 L773.5,225.4 L774.2,227.7 L774.8,230.0 L775.5,232.5 L776.2,235.1 L776.8,237.8 L777.5,240.6 L778.2,243.5 L778.8,246.6 L779.5,249.7 L780.1,252.9 L780.8,256.2 L781.5,259.6 L782.1,263.1 L782.8,266.7 L783.5,270.4 L784.1,274.2 L784.8,278.0 L785.5,281.9 L786.1,285.9 L786.8,290.0 L787.5,294.1 L788.1,298.4 L788.8,302.6 L789.5,307.0 L790.1,311.4 L790.8,315.8 L791.4,320.3 L792.1,324.9 L792.8,329.5 L793.4,334.2 L794.1,338.9 L794.8,343.6 L795.4,348.3 L796.1,353.1 L796.8,358.0 L797.4,362.8 L798.1,367.7 L798.8,372.5 L799.4,377.4 L800.1,382.4 L800.8,387.3 L801.4,392.2 L802.1,397.1 L802.7,402.0 L803.4,406.9 L804.1,411.8 L804.7,416.7 L805.4,421.6 L806.1,426.4 L806.7,431.3 L807.4,436.1 L808.1,440.8 L808.7,445.6 L809.4,450.3 L810.1,454.9 L810.7,459.5 L811.4,464.1 L812.0,468.6 L812.7,473.1 L813.4,477.5 L814.0,481.9 L814.7,486.2 L815.4,490.4 L816.0,494.5 L816.7,498.6 L817.4,502.6 L818.0,506.6 L818.7,510.4 L819.4,514.2 L820.0,517.9 L820.7,521.5 L821.4,525.0 L822.0,528.5 L822.7,531.8 L823.3,535.0 L824.0,538.2 L824.7,541.2 L825.3,544.2 L826.0,547.0 L826.7,549.7 L827.3,552.3 L828.0,554.8 L828.7,557.2 L829.3,559.5 L830.0,561.7 L830.7,563.7 L831.3,565.6 L832.0,567.4 L832.7,569.1 L833.3,570.7 L834.0,572.1 L834.6,573.4 L835.3,574.6 L836.0,575.7 L836.6,576.6 L837.3,577.5 L838.0,578.1 L838.6,578.7 L839.3,579.1 L840.0,579.4 L840.6,579.6 L841.3,579.6 L842.0,579.5 L842.6,579.2 L843.3,578.8 L844.0,578.3 L844.6,577.5 L845.3,576.6 L845.9,575.6 L846.6,574.4 L847.3,573.1 L847.9,571.6 L848.6,570.0 L849.3,568.2 L849.9,566.3 L850.6,564.2 L851.3,562.0 L851.9,559.7 L852.6,557.2 L853.3,554.6 L853.9,551.8 L854.6,549.0 L855.3,545.9 L855.9,542.8 L856.6,539.6 L857.2,536.2 L857.9,532.7 L858.6,529.1 L859.2,525.4 L859.9,521.6 L860.6,517.7 L861.2,513.7 L861.9,509.6 L862.6,505.4 L863.2,501.1 L863.9,496.7 L864.6,492.3 L865.2,487.7 L865.9,483.1 L866.6,478.5 L867.2,473.7 L867.9,468.9 L868.5,464.1 L869.2,459.2 L869.9,454.2 L870.5,449.2 L871.2,444.1 L871.9,439.0 L872.5,433.9 L873.2,428.8 L873.9,423.6 L874.5,418.4 L875.2,413.2 L875.9,407.9 L876.5,402.7 L877.2,397.4 L877.9,392.2 L878.5,386.9 L879.2,381.6 L879.8,376.4 L880.5,371.2 L881.2,365.9 L881.8,360.7 L882.5,355.5 L883.2,350.4 L883.8,345.3 L884.5,340.2 L885.2,335.1 L885.8,330.1 L886.5,325.1 L887.2,320.2 L887.8,315.3 L888.5,310.5 L889.2,305.7 L889.8,300.9 L890.5,296.3 L891.1,291.7 L891.8,287.1 L892.5,282.7 L893.1,278.3 L893.8,273.9 L894.5,269.7 L895.1,265.5 L895.8,261.4 L896.5,257.4 L897.1,253.5 L897.8,249.6 L898.5,245.9 L899.1,242.2 L899.8,238.6 L900.5,235.1 L901.1,231.7 L901.8,228.4 L902.4,225.3 L903.1,222.2 L903.8,219.2 L904.4,216.3 L905.1,213.5 L905.8,210.8 L906.4,208.2 L907.1,205.8 L907.8,203.4 L908.4,201.2 L909.1,199.0 L909.8,197.0 L910.4,195.1 L911.1,193.3 L911.8,191.6 L912.4,190.0 L913.1,188.6 L913.7,187.2 L914.4,186.0 L915.1,184.9 L915.7,183.9 L916.4,183.0 L917.1,182.3 L917.7,181.6 L918.4,181.1 L919.1,180.7 L919.7,180.5 L920.4,180.3 L921.1,180.3 L921.7,180.4 L922.4,180.6 L923.0,181.0 L923.7,181.6 L924.4,182.3 L925.0,183.1 L925.7,184.1 L926.4,185.3 L927.0,186.6 L927.7,188.0 L928.4,189.6 L929.0,191.3 L929.7,193.2 L930.4,195.2 L931.0,197.3 L931.7,199.6 L932.4,202.0 L933.0,204.6 L933.7,207.3 L934.3,210.1 L935.0,213.0 L935.7,216.1 L936.3,219.3 L937.0,222.6 L937.7,226.1 L938.3,229.6 L939.0,233.3 L939.7,237.1 L940.3,241.0 L941.0,245.0 L941.7,249.1 L942.3,253.3 L943.0,257.6 L943.7,262.0 L944.3,266.5 L945.0,271.1 L945.6,275.7 L946.3,280.5 L947.0,285.3 L947.6,290.2 L948.3,295.2 L949.0,300.2 L949.6,305.3 L950.3,310.5 L951.0,315.7 L951.6,321.0 L952.3,326.3 L953.0,331.7 L953.6,337.1 L954.3,342.6 L955.0,348.1 L955.6,353.6 L956.3,359.2 L956.9,364.7 L957.6,370.3 L958.3,376.0 L958.9,381.6 L959.6,387.2 L960.3,392.8 L960.9,398.5 L961.6,404.1 L962.3,409.7 L962.9,415.3 L963.6,420.9 L964.3,426.5 L964.9,432.1 L965.6,437.6 L966.3,443.1 L966.9,448.5 L967.6,453.9 L968.2,459.3 L968.9,464.6 L969.6,469.9 L970.2,475.1 L970.9,480.3 L971.6,485.4 L972.2,490.4 L972.9,495.3 L973.6,500.2 L974.2,505.0 L974.9,509.8 L975.6,514.4 L976.2,519.0 L976.9,523.5 L977.6,527.8 L978.2,532.1 L978.9,536.3 L979.5,540.4 L980.2,544.4 L980.9,548.2 L981.5,552.0 L982.2,555.7 L982.9,559.2 L983.5,562.6 L984.2,565.9 L984.9,569.1 L985.5,572.1 L986.2,575.0 L986.9,577.8 L987.5,580.5 L988.2,583.0 L988.9,585.4 L989.5,587.7 L990.2,589.8 L990.8,591.8 L991.5,593.6 L992.2,595.3 L992.8,596.9 L993.5,598.3 L994.2,599.5 L994.8,600.6 L995.5,601.6 L996.2,602.4 L996.8,603.1 L997.5,603.6 L998.2,604.0 L998.8,604.2 L999.5,604.3 L1000.2,604.2 L1000.8,604.0 L1001.5,603.5 L1002.1,602.9 L1002.8,602.2 L1003.5,601.3 L1004.1,600.2 L1004.8,598.9 L1005.5,597.5 L1006.1,595.9 L1006.8,594.1 L1007.5,592.2 L1008.1,590.2 L1008.8,587.9 L1009.5,585.5 L1010.1,583.0 L1010.8,580.3 L1011.4,577.5 L1012.1,574.5 L1012.8,571.4 L1013.4,568.2 L1014.1,564.8 L1014.8,561.2 L1015.4,557.6 L1016.1,553.8 L1016.8,549.9 L1017.4,545.9 L1018.1,541.7 L1018.8,537.5 L1019.4,533.1 L1020.1,528.7 L1020.8,524.1 L1021.4,519.4 L1022.1,514.7 L1022.7,509.8 L1023.4,504.9 L1024.1,499.8 L1024.7,494.7 L1025.4,489.6 L1026.1,484.3 L1026.7,479.0 L1027.4,473.7 L1028.1,468.3 L1028.7,462.8 L1029.4,457.3 L1030.1,451.7 L1030.7,446.1 L1031.4,440.5 L1032.1,434.8 L1032.7,429.1 L1033.4,423.4 L1034.0,417.7 L1034.7,411.9 L1035.4,406.2 L1036.0,400.4 L1036.7,394.7 L1037.4,388.9 L1038.0,383.2 L1038.7,377.4 L1039.4,371.7 L1040.0,366.0 L1040.7,360.3 L1041.4,354.7 L1042.0,349.0 L1042.7,343.4 L1043.4,337.9 L1044.0,332.4 L1044.7,326.9 L1045.3,321.5 L1046.0,316.1 L1046.7,310.8 L1047.3,305.6 L1048.0,300.4 L1048.7,295.2 L1049.3,290.2 L1050.0,285.2 L1050.7,280.2 L1051.3,275.4 L1052.0,270.6 L1052.7,265.9 L1053.3,261.3 L1054.0,256.8 L1054.7,252.4 L1055.3,248.1 L1056.0,243.8 L1056.6,239.7 L1057.3,235.6 L1058.0,231.6 L1058.6,227.8 L1059.3,224.0 L1060.0,220.4 L1060.6,216.9 L1061.3,213.4 L1062.0,210.1 L1062.6,206.9 L1063.3,203.8 L1064.0,200.8 L1064.6,198.0 L1065.3,195.2 L1066.0,192.6 L1066.6,190.1 L1067.3,187.7 L1067.9,185.4 L1068.6,183.3 L1069.3,181.2 L1069.9,179.3 L1070.6,177.6 L1071.3,175.9 L1071.9,174.4 L1072.6,173.0 L1073.3,171.7 L1073.9,170.6 L1074.6,169.6 L1075.3,168.7 L1075.9,168.0 L1076.6,167.3 L1077.3,166.9 L1077.9,166.5 L1078.6,166.3 L1079.2,166.2 L1079.9,166.2 L1080.6,166.4 L1081.2,166.8 L1081.9,167.3 L1082.6,167.9 L1083.2,168.8 L1083.9,169.7 L1084.6,170.9 L1085.2,172.2 L1085.9,173.6 L1086.6,175.2 L1087.2,176.9 L1087.9,178.8 L1088.6,180.9 L1089.2,183.0 L1089.9,185.4 L1090.5,187.9 L1091.2,190.5 L1091.9,193.2 L1092.5,196.1 L1093.2,199.1 L1093.9,202.3 L1094.5,205.6 L1095.2,209.0 L1095.9,212.6 L1096.5,216.3 L1097.2,220.1 L1097.9,224.0 L1098.5,228.0 L1099.2,232.2 L1099.9,236.4 L1100.5,240.8 L1101.2,245.3 L1101.8,249.8 L1102.5,254.5 L1103.2,259.3 L1103.8,264.2 L1104.5,269.1 L1105.2,274.1 L1105.8,279.3 L1106.5,284.5 L1107.2,289.7 L1107.8,295.1 L1108.5,300.5 L1109.2,306.0 L1109.8,311.5 L1110.5,317.1 L1111.2,322.8 L1111.8,328.4 L1112.5,334.2 L1113.1,340.0 L1113.8,345.8 L1114.5,351.6 L1115.1,357.5 L1115.8,363.4 L1116.5,369.3 L1117.1,375.3 L1117.8,381.2 L1118.5,387.2 L1119.1,393.1 L1119.8,399.1 L1120.5,405.1 L1121.1,411.0 L1121.8,416.9 L1122.4,422.9 L1123.1,428.8 L1123.8,434.6 L1124.4,440.5 L1125.1,446.3 L1125.8,452.1 L1126.4,457.8 L1127.1,463.5 L1127.8,469.1 L1128.4,474.7 L1129.1,480.2 L1129.8,485.7 L1130.4,491.1 L1131.1,496.4 L1131.8,501.7 L1132.4,506.9 L1133.1,512.0 L1133.7,517.0 L1134.4,522.0 L1135.1,526.8 L1135.7,531.6 L1136.4,536.3 L1137.1,540.8 L1137.7,545.3 L1138.4,549.6 L1139.1,553.9 L1139.7,558.0 L1140.4,562.1 L1141.1,566.0 L1141.7,569.7 L1142.4,573.4 L1143.1,576.9 L1143.7,580.4 L1144.4,583.6 L1145.0,586.8 L1145.7,589.8 L1146.4,592.7 L1147.0,595.4 L1147.7,598.0 L1148.4,600.5 L1149.0,602.8 L1149.7,604.9 L1150.4,607.0 L1151.0,608.8 L1151.7,610.6 L1152.4,612.1 L1153.0,613.6 L1153.7,614.8 L1154.4,615.9 L1155.0,616.9 L1155.7,617.7 L1156.3,618.3 L1157.0,618.8 L1157.7,619.2 L1158.3,619.3 L1159.0,619.4 L1159.7,619.2 L1160.3,618.9 L1161.0,618.4" stroke="#54a254" stroke-width="1.1" fill="none" clip-path="url(#pc)"/>
<rect x="0" y="712" width="1200" height="13" fill="#f0efee"/>
<rect x="0" y="712" width="1200" height="1" fill="#c8c8c8"/>
</svg></body></html>
